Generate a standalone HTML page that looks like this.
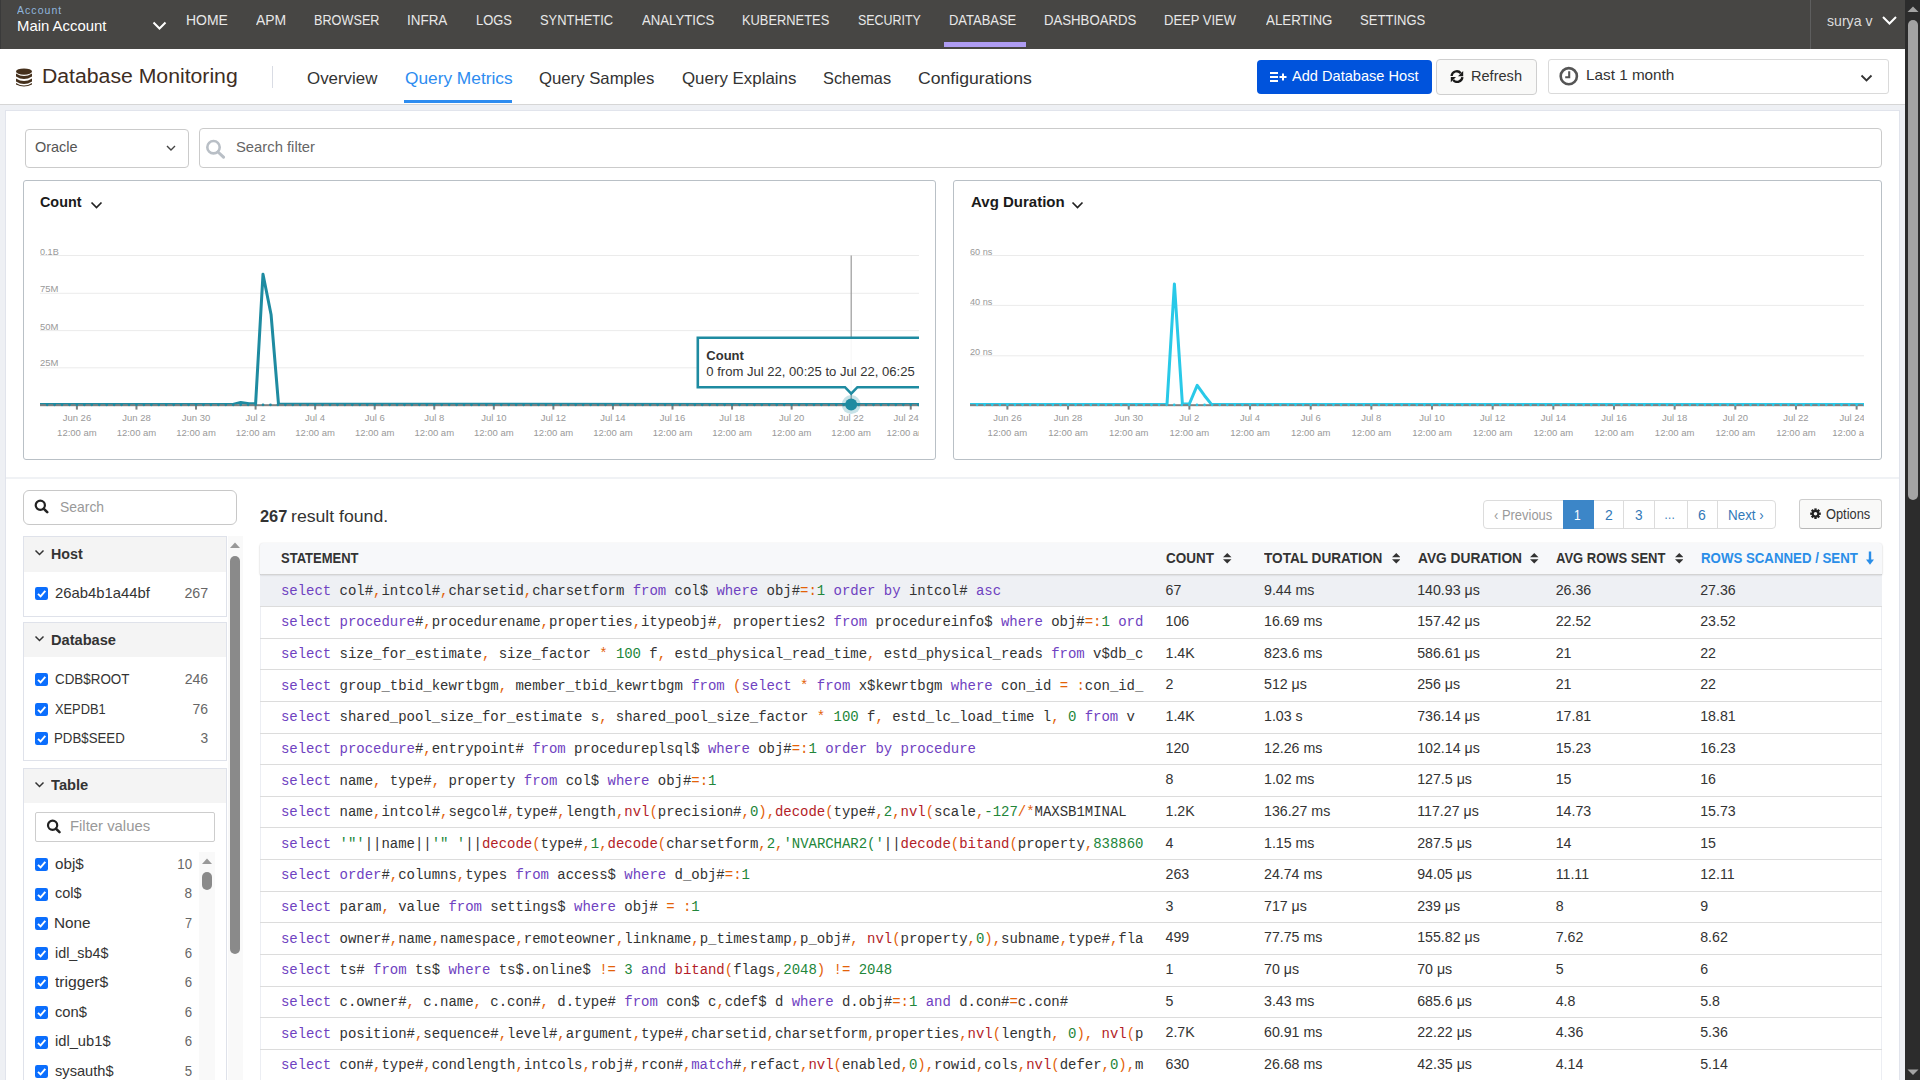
<!DOCTYPE html>
<html><head><meta charset="utf-8"><title>Database Monitoring</title>
<style>
html,body{margin:0;padding:0;width:1920px;height:1080px;overflow:hidden;background:#eef0f4;}
body{position:relative;font-family:'Liberation Sans',sans-serif;}
.t{position:absolute;white-space:nowrap;}
.r{position:absolute;box-sizing:border-box;}
.kw{color:#6f42c1}.fn{color:#b31d28}.op{color:#e36209}.nu{color:#22863a}.st{color:#22863a}
</style></head><body>
<div class="r" style="left:0.00px;top:0.00px;width:1905.00px;height:48.50px;background:#474644;"></div>
<div class="r" style="left:0.00px;top:0.00px;width:1.00px;height:48.50px;background:#3a3a3a;"></div>
<div id="t1" class="t" style="left:17.00px;top:5.53px;font-size:10.00px;line-height:10.00px;color:#8fb5dd;font-weight:400;font-family:'Liberation Sans', sans-serif;transform:scaleX(1.0507);transform-origin:left center;letter-spacing:1px;">Account</div>
<div id="t2" class="t" style="left:17.01px;top:18.30px;font-size:15.00px;line-height:15.00px;color:#ffffff;font-weight:400;font-family:'Liberation Sans', sans-serif;transform:scaleX(0.9922);transform-origin:left center;">Main Account</div>
<svg class="r" style="left:152.00px;top:21.00px;" width="15.00" height="9.00" viewBox="0 0 15.00 9.00"><path d="M1.5 1.5 L7.5 7.5 L13.5 1.5" fill="none" stroke="#fff" stroke-width="2"/></svg>
<div id="t3" class="t" style="left:186.00px;top:13.25px;font-size:14.00px;line-height:14.00px;color:#e8e8e8;font-weight:400;font-family:'Liberation Sans', sans-serif;transform:scaleX(0.9960);transform-origin:left center;">HOME</div>
<div id="t4" class="t" style="left:256.00px;top:13.25px;font-size:14.00px;line-height:14.00px;color:#e8e8e8;font-weight:400;font-family:'Liberation Sans', sans-serif;transform:scaleX(0.9941);transform-origin:left center;">APM</div>
<div id="t5" class="t" style="left:313.59px;top:13.25px;font-size:14.00px;line-height:14.00px;color:#e8e8e8;font-weight:400;font-family:'Liberation Sans', sans-serif;transform:scaleX(0.9055);transform-origin:left center;">BROWSER</div>
<div id="t6" class="t" style="left:407.04px;top:13.25px;font-size:14.00px;line-height:14.00px;color:#e8e8e8;font-weight:400;font-family:'Liberation Sans', sans-serif;transform:scaleX(0.9601);transform-origin:left center;">INFRA</div>
<div id="t7" class="t" style="left:475.82px;top:13.25px;font-size:14.00px;line-height:14.00px;color:#e8e8e8;font-weight:400;font-family:'Liberation Sans', sans-serif;transform:scaleX(0.9251);transform-origin:left center;">LOGS</div>
<div id="t8" class="t" style="left:540.00px;top:13.25px;font-size:14.00px;line-height:14.00px;color:#e8e8e8;font-weight:400;font-family:'Liberation Sans', sans-serif;transform:scaleX(0.9214);transform-origin:left center;">SYNTHETIC</div>
<div id="t9" class="t" style="left:642.00px;top:13.25px;font-size:14.00px;line-height:14.00px;color:#e8e8e8;font-weight:400;font-family:'Liberation Sans', sans-serif;transform:scaleX(0.9421);transform-origin:left center;">ANALYTICS</div>
<div id="t10" class="t" style="left:742.08px;top:13.25px;font-size:14.00px;line-height:14.00px;color:#e8e8e8;font-weight:400;font-family:'Liberation Sans', sans-serif;transform:scaleX(0.9191);transform-origin:left center;">KUBERNETES</div>
<div id="t11" class="t" style="left:857.50px;top:13.25px;font-size:14.00px;line-height:14.00px;color:#e8e8e8;font-weight:400;font-family:'Liberation Sans', sans-serif;transform:scaleX(0.8888);transform-origin:left center;">SECURITY</div>
<div id="t12" class="t" style="left:949.07px;top:13.25px;font-size:14.00px;line-height:14.00px;color:#e8e8e8;font-weight:400;font-family:'Liberation Sans', sans-serif;transform:scaleX(0.9260);transform-origin:left center;">DATABASE</div>
<div id="t13" class="t" style="left:1044.06px;top:13.25px;font-size:14.00px;line-height:14.00px;color:#e8e8e8;font-weight:400;font-family:'Liberation Sans', sans-serif;transform:scaleX(0.9412);transform-origin:left center;">DASHBOARDS</div>
<div id="t14" class="t" style="left:1164.07px;top:13.25px;font-size:14.00px;line-height:14.00px;color:#e8e8e8;font-weight:400;font-family:'Liberation Sans', sans-serif;transform:scaleX(0.9281);transform-origin:left center;">DEEP VIEW</div>
<div id="t15" class="t" style="left:1265.50px;top:13.25px;font-size:14.00px;line-height:14.00px;color:#e8e8e8;font-weight:400;font-family:'Liberation Sans', sans-serif;transform:scaleX(0.9511);transform-origin:left center;">ALERTING</div>
<div id="t16" class="t" style="left:1359.50px;top:13.25px;font-size:14.00px;line-height:14.00px;color:#e8e8e8;font-weight:400;font-family:'Liberation Sans', sans-serif;transform:scaleX(0.9330);transform-origin:left center;">SETTINGS</div>
<div class="r" style="left:944.00px;top:42.00px;width:82.00px;height:5.00px;background:#ae9cf2;"></div>
<div class="r" style="left:1809.50px;top:0.00px;width:1.00px;height:48.50px;background:#5e5e5e;"></div>
<div id="t17" class="t" style="left:1827.00px;top:13.30px;font-size:15.00px;line-height:15.00px;color:#dcdcdc;font-weight:400;font-family:'Liberation Sans', sans-serif;transform:scaleX(0.9397);transform-origin:left center;">surya v</div>
<svg class="r" style="left:1882.00px;top:16.00px;" width="15.00" height="9.00" viewBox="0 0 15.00 9.00"><path d="M1 1 L7.5 7.5 L14 1" fill="none" stroke="#fff" stroke-width="2"/></svg>
<div class="r" style="left:1905.00px;top:0.00px;width:15.00px;height:1080.00px;background:#2c2c2c;"></div>
<svg class="r" style="left:1907.00px;top:6.00px;" width="12.00" height="7.00" viewBox="0 0 12.00 7.00"><path d="M6 0.5 L11.5 6 L0.5 6 Z" fill="#a3a3a3"/></svg>
<div class="r" style="left:1908.00px;top:20.00px;width:10.00px;height:480.00px;background:#a3a3a3;border-radius:5px;"></div>
<svg class="r" style="left:1907.00px;top:1068.50px;" width="12.00" height="7.00" viewBox="0 0 12.00 7.00"><path d="M0.5 0.5 L11.5 0.5 L6 6 Z" fill="#a3a3a3"/></svg>
<div class="r" style="left:0.00px;top:48.50px;width:1905.00px;height:55.50px;background:#fff;"></div>
<div class="r" style="left:0.00px;top:104.00px;width:1905.00px;height:1.00px;background:#d6d6d6;"></div>
<svg class="r" style="left:15.00px;top:68.00px;" width="18.00" height="20.00" viewBox="0 0 18.00 20.00"><g fill="#45301c">
<ellipse cx="9" cy="3.6" rx="8" ry="3.2"/>
<path d="M1 5.5 Q9 10.5 17 5.5 L17 8.5 Q9 13.5 1 8.5 Z"/>
<path d="M1 10.5 Q9 15.5 17 10.5 L17 13.5 Q9 18.5 1 13.5 Z"/>
<path d="M1 15 Q9 20 17 15 L17 16.5 Q9 20.5 1 16.5 Z"/>
</g></svg>
<div id="t18" class="t" style="left:41.91px;top:67.09px;font-size:19.50px;line-height:19.50px;color:#3e2d1f;font-weight:400;font-family:'Liberation Sans', sans-serif;transform:scaleX(1.0876);transform-origin:left center;">Database Monitoring</div>
<div class="r" style="left:271.50px;top:66.00px;width:1.50px;height:22.00px;background:#d9dce4;"></div>
<div id="t19" class="t" style="left:307.00px;top:69.78px;font-size:16.50px;line-height:16.50px;color:#333;font-weight:400;font-family:'Liberation Sans', sans-serif;transform:scaleX(1.0240);transform-origin:left center;">Overview</div>
<div id="t20" class="t" style="left:404.60px;top:69.78px;font-size:16.50px;line-height:16.50px;color:#2d8cf0;font-weight:400;font-family:'Liberation Sans', sans-serif;transform:scaleX(1.0475);transform-origin:left center;">Query Metrics</div>
<div id="t21" class="t" style="left:539.40px;top:69.78px;font-size:16.50px;line-height:16.50px;color:#333;font-weight:400;font-family:'Liberation Sans', sans-serif;transform:scaleX(1.0136);transform-origin:left center;">Query Samples</div>
<div id="t22" class="t" style="left:681.90px;top:69.78px;font-size:16.50px;line-height:16.50px;color:#333;font-weight:400;font-family:'Liberation Sans', sans-serif;transform:scaleX(1.0221);transform-origin:left center;">Query Explains</div>
<div id="t23" class="t" style="left:823.00px;top:69.78px;font-size:16.50px;line-height:16.50px;color:#333;font-weight:400;font-family:'Liberation Sans', sans-serif;transform:scaleX(0.9894);transform-origin:left center;">Schemas</div>
<div id="t24" class="t" style="left:918.00px;top:69.78px;font-size:16.50px;line-height:16.50px;color:#333;font-weight:400;font-family:'Liberation Sans', sans-serif;transform:scaleX(1.0693);transform-origin:left center;">Configurations</div>
<div class="r" style="left:404.00px;top:100.00px;width:108.00px;height:3.00px;background:#2d8cf0;"></div>
<div class="r" style="left:1257.00px;top:60.00px;width:175.00px;height:34.00px;background:#0053dc;border-radius:4px;"></div>
<svg class="r" style="left:1269.00px;top:71.00px;" width="18.00" height="12.00" viewBox="0 0 18.00 12.00"><g fill="#fff"><rect x="1" y="1" width="8" height="2"/><rect x="1" y="5" width="8" height="2"/><rect x="1" y="9" width="8" height="2"/><rect x="10.5" y="5" width="7" height="2"/><rect x="13" y="2.5" width="2" height="7"/></g></svg>
<div id="t25" class="t" style="left:1291.70px;top:68.10px;font-size:15.00px;line-height:15.00px;color:#fff;font-weight:400;font-family:'Liberation Sans', sans-serif;transform:scaleX(0.9724);transform-origin:left center;">Add Database Host</div>
<div class="r" style="left:1436.00px;top:59.00px;width:101.00px;height:36.00px;background:#f9f9f8;border:1px solid #cfcfcf;border-radius:4px;"></div>
<svg class="r" style="left:1449.50px;top:69.50px;" width="14.00" height="13.00" viewBox="0 0 14.00 13.00"><g fill="none" stroke="#1a1a1a" stroke-width="2.3">
<path d="M1.6 6 A5.2 5.2 0 0 1 10.8 3.2"/><path d="M12.4 7.2 A5.2 5.2 0 0 1 3.2 10"/></g>
<path d="M8 6.2 L13.2 6.2 L13.2 1 Z" fill="#1a1a1a"/><path d="M6 7 L0.8 7 L0.8 12.2 Z" fill="#1a1a1a"/></svg>
<div id="t26" class="t" style="left:1471.03px;top:68.10px;font-size:15.00px;line-height:15.00px;color:#333;font-weight:400;font-family:'Liberation Sans', sans-serif;transform:scaleX(0.9711);transform-origin:left center;">Refresh</div>
<div class="r" style="left:1548.00px;top:59.00px;width:341.00px;height:35.00px;background:#fff;border:1px solid #dadada;border-radius:3px;"></div>
<svg class="r" style="left:1558.00px;top:66.00px;" width="22.00" height="20.00" viewBox="0 0 22.00 20.00"><circle cx="10.8" cy="10.2" r="8.1" fill="none" stroke="#555" stroke-width="2.6"/><path d="M11.2 5.2 L11.2 11.2 L7.2 11.2" fill="none" stroke="#555" stroke-width="2.1"/></svg>
<div id="t27" class="t" style="left:1585.98px;top:66.90px;font-size:15.00px;line-height:15.00px;color:#333;font-weight:400;font-family:'Liberation Sans', sans-serif;transform:scaleX(1.0190);transform-origin:left center;">Last 1 month</div>
<svg class="r" style="left:1860.00px;top:74.00px;" width="14.00" height="9.00" viewBox="0 0 14.00 9.00"><path d="M1.5 1.5 L6.5 6.5 L11.5 1.5" fill="none" stroke="#333" stroke-width="1.8"/></svg>
<div class="r" style="left:5.00px;top:110.00px;width:1895.00px;height:980.00px;background:#fff;border:1px solid #e1e4ec;"></div>
<div class="r" style="left:25.00px;top:129.00px;width:163.50px;height:38.50px;background:#fff;border:1px solid #cbcbcb;border-radius:4px;"></div>
<div id="t28" class="t" style="left:35.00px;top:140.02px;font-size:14.50px;line-height:14.50px;color:#555;font-weight:400;font-family:'Liberation Sans', sans-serif;transform:scaleX(0.9967);transform-origin:left center;">Oracle</div>
<svg class="r" style="left:165.00px;top:144.00px;" width="12.00" height="8.00" viewBox="0 0 12.00 8.00"><path d="M2 2 L6 6 L10 2" fill="none" stroke="#444" stroke-width="1.4"/></svg>
<div class="r" style="left:198.50px;top:128.40px;width:1683.20px;height:40.00px;background:#fff;border:1px solid #cbcbcb;border-radius:4px;"></div>
<svg class="r" style="left:205.00px;top:139.00px;" width="22.00" height="20.00" viewBox="0 0 22.00 20.00"><circle cx="8.5" cy="8.2" r="6.2" fill="none" stroke="#b9bfc6" stroke-width="2.6"/><path d="M13 13 L18.5 18.2" stroke="#b9bfc6" stroke-width="3" stroke-linecap="round"/></svg>
<div id="t29" class="t" style="left:235.50px;top:140.02px;font-size:14.50px;line-height:14.50px;color:#666;font-weight:400;font-family:'Liberation Sans', sans-serif;transform:scaleX(1.0202);transform-origin:left center;">Search filter</div>
<div class="r" style="left:6.00px;top:477.00px;width:1893.00px;height:2.00px;background:#f0f2f5;"></div>
<div class="r" style="left:23.00px;top:180.00px;width:912.50px;height:279.60px;background:#fff;border:1px solid #b9c0c6;border-radius:3px;"></div>
<div id="t30" class="t" style="left:40.20px;top:195.35px;font-size:14.00px;line-height:14.00px;color:#1a1a1a;font-weight:700;font-family:'Liberation Sans', sans-serif;transform:scaleX(1.0254);transform-origin:left center;">Count</div>
<svg class="r" style="left:90.00px;top:201.00px;" width="13.00" height="9.00" viewBox="0 0 13.00 9.00"><path d="M1.5 1.5 L6.5 6.5 L11.5 1.5" fill="none" stroke="#222" stroke-width="1.7"/></svg>
<svg class="r" style="left:40.00px;top:230.00px;overflow:hidden;" width="879.00" height="220.00" viewBox="0 0 879.00 220.00"><rect x="0" y="25.00" width="879.00" height="1" fill="#ebebeb"/><rect x="0" y="62.80" width="879.00" height="1" fill="#ebebeb"/><rect x="0" y="100.10" width="879.00" height="1" fill="#ebebeb"/><rect x="0" y="137.30" width="879.00" height="1" fill="#ebebeb"/><polyline points="-2.00,174.60 192.00,174.60 200.70,172.40 209.00,173.80 215.60,173.80 223.00,44.20 231.10,84.80 238.50,174.20 885.00,174.60" fill="none" stroke="#1e8ba1" stroke-width="3" stroke-linejoin="round" stroke-linecap="round"/><rect x="0" y="174.20" width="879.00" height="2" fill="#808080"/><rect x="35.90" y="175.60" width="2" height="4" fill="#808080"/><rect x="95.46" y="175.60" width="2" height="4" fill="#808080"/><rect x="155.02" y="175.60" width="2" height="4" fill="#808080"/><rect x="214.58" y="175.60" width="2" height="4" fill="#808080"/><rect x="274.14" y="175.60" width="2" height="4" fill="#808080"/><rect x="333.70" y="175.60" width="2" height="4" fill="#808080"/><rect x="393.26" y="175.60" width="2" height="4" fill="#808080"/><rect x="452.82" y="175.60" width="2" height="4" fill="#808080"/><rect x="512.38" y="175.60" width="2" height="4" fill="#808080"/><rect x="571.94" y="175.60" width="2" height="4" fill="#808080"/><rect x="631.50" y="175.60" width="2" height="4" fill="#808080"/><rect x="691.06" y="175.60" width="2" height="4" fill="#808080"/><rect x="750.62" y="175.60" width="2" height="4" fill="#808080"/><rect x="810.18" y="175.60" width="2" height="4" fill="#808080"/><rect x="869.74" y="175.60" width="2" height="4" fill="#808080"/><circle cx="7.12" cy="174.80" r="1.35" fill="#1e8ba1"/><circle cx="14.57" cy="174.80" r="1.35" fill="#1e8ba1"/><circle cx="22.01" cy="174.80" r="1.35" fill="#1e8ba1"/><circle cx="29.46" cy="174.80" r="1.35" fill="#1e8ba1"/><circle cx="36.90" cy="174.80" r="1.35" fill="#1e8ba1"/><circle cx="44.34" cy="174.80" r="1.35" fill="#1e8ba1"/><circle cx="51.79" cy="174.80" r="1.35" fill="#1e8ba1"/><circle cx="59.23" cy="174.80" r="1.35" fill="#1e8ba1"/><circle cx="66.68" cy="174.80" r="1.35" fill="#1e8ba1"/><circle cx="74.12" cy="174.80" r="1.35" fill="#1e8ba1"/><circle cx="81.57" cy="174.80" r="1.35" fill="#1e8ba1"/><circle cx="89.01" cy="174.80" r="1.35" fill="#1e8ba1"/><circle cx="96.46" cy="174.80" r="1.35" fill="#1e8ba1"/><circle cx="103.90" cy="174.80" r="1.35" fill="#1e8ba1"/><circle cx="111.35" cy="174.80" r="1.35" fill="#1e8ba1"/><circle cx="118.79" cy="174.80" r="1.35" fill="#1e8ba1"/><circle cx="126.24" cy="174.80" r="1.35" fill="#1e8ba1"/><circle cx="133.68" cy="174.80" r="1.35" fill="#1e8ba1"/><circle cx="141.13" cy="174.80" r="1.35" fill="#1e8ba1"/><circle cx="148.57" cy="174.80" r="1.35" fill="#1e8ba1"/><circle cx="156.02" cy="174.80" r="1.35" fill="#1e8ba1"/><circle cx="163.46" cy="174.80" r="1.35" fill="#1e8ba1"/><circle cx="170.91" cy="174.80" r="1.35" fill="#1e8ba1"/><circle cx="178.35" cy="174.80" r="1.35" fill="#1e8ba1"/><circle cx="185.80" cy="174.80" r="1.35" fill="#1e8ba1"/><circle cx="193.24" cy="174.80" r="1.35" fill="#1e8ba1"/><circle cx="200.69" cy="174.80" r="1.35" fill="#1e8ba1"/><circle cx="208.13" cy="174.80" r="1.35" fill="#1e8ba1"/><circle cx="215.58" cy="174.80" r="1.35" fill="#1e8ba1"/><circle cx="223.02" cy="174.80" r="1.35" fill="#1e8ba1"/><circle cx="230.47" cy="174.80" r="1.35" fill="#1e8ba1"/><circle cx="237.91" cy="174.80" r="1.35" fill="#1e8ba1"/><circle cx="245.36" cy="174.80" r="1.35" fill="#1e8ba1"/><circle cx="252.80" cy="174.80" r="1.35" fill="#1e8ba1"/><circle cx="260.25" cy="174.80" r="1.35" fill="#1e8ba1"/><circle cx="267.69" cy="174.80" r="1.35" fill="#1e8ba1"/><circle cx="275.14" cy="174.80" r="1.35" fill="#1e8ba1"/><circle cx="282.58" cy="174.80" r="1.35" fill="#1e8ba1"/><circle cx="290.03" cy="174.80" r="1.35" fill="#1e8ba1"/><circle cx="297.47" cy="174.80" r="1.35" fill="#1e8ba1"/><circle cx="304.92" cy="174.80" r="1.35" fill="#1e8ba1"/><circle cx="312.36" cy="174.80" r="1.35" fill="#1e8ba1"/><circle cx="319.81" cy="174.80" r="1.35" fill="#1e8ba1"/><circle cx="327.25" cy="174.80" r="1.35" fill="#1e8ba1"/><circle cx="334.70" cy="174.80" r="1.35" fill="#1e8ba1"/><circle cx="342.14" cy="174.80" r="1.35" fill="#1e8ba1"/><circle cx="349.59" cy="174.80" r="1.35" fill="#1e8ba1"/><circle cx="357.03" cy="174.80" r="1.35" fill="#1e8ba1"/><circle cx="364.48" cy="174.80" r="1.35" fill="#1e8ba1"/><circle cx="371.92" cy="174.80" r="1.35" fill="#1e8ba1"/><circle cx="379.37" cy="174.80" r="1.35" fill="#1e8ba1"/><circle cx="386.81" cy="174.80" r="1.35" fill="#1e8ba1"/><circle cx="394.26" cy="174.80" r="1.35" fill="#1e8ba1"/><circle cx="401.70" cy="174.80" r="1.35" fill="#1e8ba1"/><circle cx="409.15" cy="174.80" r="1.35" fill="#1e8ba1"/><circle cx="416.59" cy="174.80" r="1.35" fill="#1e8ba1"/><circle cx="424.04" cy="174.80" r="1.35" fill="#1e8ba1"/><circle cx="431.48" cy="174.80" r="1.35" fill="#1e8ba1"/><circle cx="438.93" cy="174.80" r="1.35" fill="#1e8ba1"/><circle cx="446.37" cy="174.80" r="1.35" fill="#1e8ba1"/><circle cx="453.82" cy="174.80" r="1.35" fill="#1e8ba1"/><circle cx="461.26" cy="174.80" r="1.35" fill="#1e8ba1"/><circle cx="468.71" cy="174.80" r="1.35" fill="#1e8ba1"/><circle cx="476.15" cy="174.80" r="1.35" fill="#1e8ba1"/><circle cx="483.60" cy="174.80" r="1.35" fill="#1e8ba1"/><circle cx="491.04" cy="174.80" r="1.35" fill="#1e8ba1"/><circle cx="498.49" cy="174.80" r="1.35" fill="#1e8ba1"/><circle cx="505.93" cy="174.80" r="1.35" fill="#1e8ba1"/><circle cx="513.38" cy="174.80" r="1.35" fill="#1e8ba1"/><circle cx="520.82" cy="174.80" r="1.35" fill="#1e8ba1"/><circle cx="528.27" cy="174.80" r="1.35" fill="#1e8ba1"/><circle cx="535.72" cy="174.80" r="1.35" fill="#1e8ba1"/><circle cx="543.16" cy="174.80" r="1.35" fill="#1e8ba1"/><circle cx="550.61" cy="174.80" r="1.35" fill="#1e8ba1"/><circle cx="558.05" cy="174.80" r="1.35" fill="#1e8ba1"/><circle cx="565.50" cy="174.80" r="1.35" fill="#1e8ba1"/><circle cx="572.94" cy="174.80" r="1.35" fill="#1e8ba1"/><circle cx="580.39" cy="174.80" r="1.35" fill="#1e8ba1"/><circle cx="587.83" cy="174.80" r="1.35" fill="#1e8ba1"/><circle cx="595.28" cy="174.80" r="1.35" fill="#1e8ba1"/><circle cx="602.72" cy="174.80" r="1.35" fill="#1e8ba1"/><circle cx="610.17" cy="174.80" r="1.35" fill="#1e8ba1"/><circle cx="617.61" cy="174.80" r="1.35" fill="#1e8ba1"/><circle cx="625.06" cy="174.80" r="1.35" fill="#1e8ba1"/><circle cx="632.50" cy="174.80" r="1.35" fill="#1e8ba1"/><circle cx="639.95" cy="174.80" r="1.35" fill="#1e8ba1"/><circle cx="647.39" cy="174.80" r="1.35" fill="#1e8ba1"/><circle cx="654.84" cy="174.80" r="1.35" fill="#1e8ba1"/><circle cx="662.28" cy="174.80" r="1.35" fill="#1e8ba1"/><circle cx="669.73" cy="174.80" r="1.35" fill="#1e8ba1"/><circle cx="677.17" cy="174.80" r="1.35" fill="#1e8ba1"/><circle cx="684.62" cy="174.80" r="1.35" fill="#1e8ba1"/><circle cx="692.06" cy="174.80" r="1.35" fill="#1e8ba1"/><circle cx="699.51" cy="174.80" r="1.35" fill="#1e8ba1"/><circle cx="706.95" cy="174.80" r="1.35" fill="#1e8ba1"/><circle cx="714.40" cy="174.80" r="1.35" fill="#1e8ba1"/><circle cx="721.84" cy="174.80" r="1.35" fill="#1e8ba1"/><circle cx="729.29" cy="174.80" r="1.35" fill="#1e8ba1"/><circle cx="736.73" cy="174.80" r="1.35" fill="#1e8ba1"/><circle cx="744.18" cy="174.80" r="1.35" fill="#1e8ba1"/><circle cx="751.62" cy="174.80" r="1.35" fill="#1e8ba1"/><circle cx="759.07" cy="174.80" r="1.35" fill="#1e8ba1"/><circle cx="766.51" cy="174.80" r="1.35" fill="#1e8ba1"/><circle cx="773.96" cy="174.80" r="1.35" fill="#1e8ba1"/><circle cx="781.40" cy="174.80" r="1.35" fill="#1e8ba1"/><circle cx="788.85" cy="174.80" r="1.35" fill="#1e8ba1"/><circle cx="796.29" cy="174.80" r="1.35" fill="#1e8ba1"/><circle cx="803.74" cy="174.80" r="1.35" fill="#1e8ba1"/><circle cx="811.18" cy="174.80" r="1.35" fill="#1e8ba1"/><circle cx="818.63" cy="174.80" r="1.35" fill="#1e8ba1"/><circle cx="826.07" cy="174.80" r="1.35" fill="#1e8ba1"/><circle cx="833.52" cy="174.80" r="1.35" fill="#1e8ba1"/><circle cx="840.96" cy="174.80" r="1.35" fill="#1e8ba1"/><circle cx="848.41" cy="174.80" r="1.35" fill="#1e8ba1"/><circle cx="855.85" cy="174.80" r="1.35" fill="#1e8ba1"/><circle cx="863.30" cy="174.80" r="1.35" fill="#1e8ba1"/><circle cx="870.74" cy="174.80" r="1.35" fill="#1e8ba1"/><circle cx="878.19" cy="174.80" r="1.35" fill="#1e8ba1"/><line x1="811.20" y1="25.5" x2="811.20" y2="174" stroke="#9a9a9a" stroke-width="1.2"/><circle cx="811.20" cy="174.6" r="9.5" fill="#1e8ba1" fill-opacity="0.25"/><circle cx="811.20" cy="174.6" r="6" fill="#1e8ba1"/><path d="M1000.00 107.8 L657.80 107.8 L657.80 157.2 L805.00 157.2 L811.20 163.6 L817.40 157.2 L1000.00 157.2" fill="#fff" fill-opacity="0.92" stroke="#1e8ba1" stroke-width="2.6"/><text x="666.30" y="130.2" font-family="Liberation Sans" font-size="13" font-weight="700" fill="#333">Count</text><text x="666.30" y="145.8" font-family="Liberation Sans" font-size="12.7" textLength="208.5" lengthAdjust="spacingAndGlyphs" fill="#333">0 from Jul 22, 00:25 to Jul 22, 06:25</text></svg>
<div id="t31" class="t" style="left:40.00px;top:248.08px;font-size:9.00px;line-height:9.00px;color:#999;font-weight:400;font-family:'Liberation Sans', sans-serif;transform:scaleX(1.0102);transform-origin:left center;">0.1B</div>
<div id="t32" class="t" style="left:40.00px;top:285.28px;font-size:9.00px;line-height:9.00px;color:#999;font-weight:400;font-family:'Liberation Sans', sans-serif;transform:scaleX(1.0523);transform-origin:left center;">75M</div>
<div id="t33" class="t" style="left:40.00px;top:322.68px;font-size:9.00px;line-height:9.00px;color:#999;font-weight:400;font-family:'Liberation Sans', sans-serif;transform:scaleX(1.0523);transform-origin:left center;">50M</div>
<div id="t34" class="t" style="left:40.00px;top:359.08px;font-size:9.00px;line-height:9.00px;color:#999;font-weight:400;font-family:'Liberation Sans', sans-serif;transform:scaleX(1.0523);transform-origin:left center;">25M</div>
<div class="r" style="left:40.00px;top:230px;width:879.00px;height:220px;overflow:hidden;"><div class="t" style="left:-3.10px;top:183.26px;width:80px;text-align:center;font-size:9.5px;line-height:9.5px;color:#999;">Jun 26</div><div class="t" style="left:-3.10px;top:198.26px;width:80px;text-align:center;font-size:9.5px;line-height:9.5px;color:#999;">12:00 am</div><div class="t" style="left:56.46px;top:183.26px;width:80px;text-align:center;font-size:9.5px;line-height:9.5px;color:#999;">Jun 28</div><div class="t" style="left:56.46px;top:198.26px;width:80px;text-align:center;font-size:9.5px;line-height:9.5px;color:#999;">12:00 am</div><div class="t" style="left:116.02px;top:183.26px;width:80px;text-align:center;font-size:9.5px;line-height:9.5px;color:#999;">Jun 30</div><div class="t" style="left:116.02px;top:198.26px;width:80px;text-align:center;font-size:9.5px;line-height:9.5px;color:#999;">12:00 am</div><div class="t" style="left:175.58px;top:183.26px;width:80px;text-align:center;font-size:9.5px;line-height:9.5px;color:#999;">Jul 2</div><div class="t" style="left:175.58px;top:198.26px;width:80px;text-align:center;font-size:9.5px;line-height:9.5px;color:#999;">12:00 am</div><div class="t" style="left:235.14px;top:183.26px;width:80px;text-align:center;font-size:9.5px;line-height:9.5px;color:#999;">Jul 4</div><div class="t" style="left:235.14px;top:198.26px;width:80px;text-align:center;font-size:9.5px;line-height:9.5px;color:#999;">12:00 am</div><div class="t" style="left:294.70px;top:183.26px;width:80px;text-align:center;font-size:9.5px;line-height:9.5px;color:#999;">Jul 6</div><div class="t" style="left:294.70px;top:198.26px;width:80px;text-align:center;font-size:9.5px;line-height:9.5px;color:#999;">12:00 am</div><div class="t" style="left:354.26px;top:183.26px;width:80px;text-align:center;font-size:9.5px;line-height:9.5px;color:#999;">Jul 8</div><div class="t" style="left:354.26px;top:198.26px;width:80px;text-align:center;font-size:9.5px;line-height:9.5px;color:#999;">12:00 am</div><div class="t" style="left:413.82px;top:183.26px;width:80px;text-align:center;font-size:9.5px;line-height:9.5px;color:#999;">Jul 10</div><div class="t" style="left:413.82px;top:198.26px;width:80px;text-align:center;font-size:9.5px;line-height:9.5px;color:#999;">12:00 am</div><div class="t" style="left:473.38px;top:183.26px;width:80px;text-align:center;font-size:9.5px;line-height:9.5px;color:#999;">Jul 12</div><div class="t" style="left:473.38px;top:198.26px;width:80px;text-align:center;font-size:9.5px;line-height:9.5px;color:#999;">12:00 am</div><div class="t" style="left:532.94px;top:183.26px;width:80px;text-align:center;font-size:9.5px;line-height:9.5px;color:#999;">Jul 14</div><div class="t" style="left:532.94px;top:198.26px;width:80px;text-align:center;font-size:9.5px;line-height:9.5px;color:#999;">12:00 am</div><div class="t" style="left:592.50px;top:183.26px;width:80px;text-align:center;font-size:9.5px;line-height:9.5px;color:#999;">Jul 16</div><div class="t" style="left:592.50px;top:198.26px;width:80px;text-align:center;font-size:9.5px;line-height:9.5px;color:#999;">12:00 am</div><div class="t" style="left:652.06px;top:183.26px;width:80px;text-align:center;font-size:9.5px;line-height:9.5px;color:#999;">Jul 18</div><div class="t" style="left:652.06px;top:198.26px;width:80px;text-align:center;font-size:9.5px;line-height:9.5px;color:#999;">12:00 am</div><div class="t" style="left:711.62px;top:183.26px;width:80px;text-align:center;font-size:9.5px;line-height:9.5px;color:#999;">Jul 20</div><div class="t" style="left:711.62px;top:198.26px;width:80px;text-align:center;font-size:9.5px;line-height:9.5px;color:#999;">12:00 am</div><div class="t" style="left:771.18px;top:183.26px;width:80px;text-align:center;font-size:9.5px;line-height:9.5px;color:#999;">Jul 22</div><div class="t" style="left:771.18px;top:198.26px;width:80px;text-align:center;font-size:9.5px;line-height:9.5px;color:#999;">12:00 am</div><div class="t" style="left:826.24px;top:183.26px;width:80px;text-align:center;font-size:9.5px;line-height:9.5px;color:#999;">Jul 24</div><div class="t" style="left:826.24px;top:198.26px;width:80px;text-align:center;font-size:9.5px;line-height:9.5px;color:#999;">12:00 am</div></div>
<div class="r" style="left:953.40px;top:180.00px;width:928.30px;height:279.60px;background:#fff;border:1px solid #b9c0c6;border-radius:3px;"></div>
<div id="t35" class="t" style="left:970.60px;top:195.35px;font-size:14.00px;line-height:14.00px;color:#1a1a1a;font-weight:700;font-family:'Liberation Sans', sans-serif;transform:scaleX(1.0724);transform-origin:left center;">Avg Duration</div>
<svg class="r" style="left:1071.00px;top:201.00px;" width="13.00" height="9.00" viewBox="0 0 13.00 9.00"><path d="M1.5 1.5 L6.5 6.5 L11.5 1.5" fill="none" stroke="#222" stroke-width="1.7"/></svg>
<svg class="r" style="left:970.00px;top:230.00px;overflow:hidden;" width="894.40" height="220.00" viewBox="0 0 894.40 220.00"><rect x="0" y="25.00" width="894.40" height="1" fill="#ebebeb"/><rect x="0" y="74.90" width="894.40" height="1" fill="#ebebeb"/><rect x="0" y="125.30" width="894.40" height="1" fill="#ebebeb"/><polyline points="-2.00,174.60 197.00,174.40 204.40,53.90 212.40,174.00 219.30,174.00 227.20,155.30 234.60,165.70 241.50,174.40 900.00,174.60" fill="none" stroke="#29c9e8" stroke-width="3" stroke-linejoin="round" stroke-linecap="round"/><rect x="0" y="174.20" width="894.40" height="2" fill="#808080"/><rect x="36.40" y="175.60" width="2" height="4" fill="#808080"/><rect x="97.06" y="175.60" width="2" height="4" fill="#808080"/><rect x="157.72" y="175.60" width="2" height="4" fill="#808080"/><rect x="218.38" y="175.60" width="2" height="4" fill="#808080"/><rect x="279.04" y="175.60" width="2" height="4" fill="#808080"/><rect x="339.70" y="175.60" width="2" height="4" fill="#808080"/><rect x="400.36" y="175.60" width="2" height="4" fill="#808080"/><rect x="461.02" y="175.60" width="2" height="4" fill="#808080"/><rect x="521.68" y="175.60" width="2" height="4" fill="#808080"/><rect x="582.34" y="175.60" width="2" height="4" fill="#808080"/><rect x="643.00" y="175.60" width="2" height="4" fill="#808080"/><rect x="703.66" y="175.60" width="2" height="4" fill="#808080"/><rect x="764.32" y="175.60" width="2" height="4" fill="#808080"/><rect x="824.98" y="175.60" width="2" height="4" fill="#808080"/><rect x="885.64" y="175.60" width="2" height="4" fill="#808080"/><circle cx="7.07" cy="174.80" r="1.35" fill="#29c9e8"/><circle cx="14.65" cy="174.80" r="1.35" fill="#29c9e8"/><circle cx="22.24" cy="174.80" r="1.35" fill="#29c9e8"/><circle cx="29.82" cy="174.80" r="1.35" fill="#29c9e8"/><circle cx="37.40" cy="174.80" r="1.35" fill="#29c9e8"/><circle cx="44.98" cy="174.80" r="1.35" fill="#29c9e8"/><circle cx="52.56" cy="174.80" r="1.35" fill="#29c9e8"/><circle cx="60.15" cy="174.80" r="1.35" fill="#29c9e8"/><circle cx="67.73" cy="174.80" r="1.35" fill="#29c9e8"/><circle cx="75.31" cy="174.80" r="1.35" fill="#29c9e8"/><circle cx="82.89" cy="174.80" r="1.35" fill="#29c9e8"/><circle cx="90.48" cy="174.80" r="1.35" fill="#29c9e8"/><circle cx="98.06" cy="174.80" r="1.35" fill="#29c9e8"/><circle cx="105.64" cy="174.80" r="1.35" fill="#29c9e8"/><circle cx="113.22" cy="174.80" r="1.35" fill="#29c9e8"/><circle cx="120.81" cy="174.80" r="1.35" fill="#29c9e8"/><circle cx="128.39" cy="174.80" r="1.35" fill="#29c9e8"/><circle cx="135.97" cy="174.80" r="1.35" fill="#29c9e8"/><circle cx="143.55" cy="174.80" r="1.35" fill="#29c9e8"/><circle cx="151.14" cy="174.80" r="1.35" fill="#29c9e8"/><circle cx="158.72" cy="174.80" r="1.35" fill="#29c9e8"/><circle cx="166.30" cy="174.80" r="1.35" fill="#29c9e8"/><circle cx="173.88" cy="174.80" r="1.35" fill="#29c9e8"/><circle cx="181.47" cy="174.80" r="1.35" fill="#29c9e8"/><circle cx="189.05" cy="174.80" r="1.35" fill="#29c9e8"/><circle cx="196.63" cy="174.80" r="1.35" fill="#29c9e8"/><circle cx="204.21" cy="174.80" r="1.35" fill="#29c9e8"/><circle cx="211.80" cy="174.80" r="1.35" fill="#29c9e8"/><circle cx="219.38" cy="174.80" r="1.35" fill="#29c9e8"/><circle cx="226.96" cy="174.80" r="1.35" fill="#29c9e8"/><circle cx="234.54" cy="174.80" r="1.35" fill="#29c9e8"/><circle cx="242.13" cy="174.80" r="1.35" fill="#29c9e8"/><circle cx="249.71" cy="174.80" r="1.35" fill="#29c9e8"/><circle cx="257.29" cy="174.80" r="1.35" fill="#29c9e8"/><circle cx="264.87" cy="174.80" r="1.35" fill="#29c9e8"/><circle cx="272.46" cy="174.80" r="1.35" fill="#29c9e8"/><circle cx="280.04" cy="174.80" r="1.35" fill="#29c9e8"/><circle cx="287.62" cy="174.80" r="1.35" fill="#29c9e8"/><circle cx="295.20" cy="174.80" r="1.35" fill="#29c9e8"/><circle cx="302.79" cy="174.80" r="1.35" fill="#29c9e8"/><circle cx="310.37" cy="174.80" r="1.35" fill="#29c9e8"/><circle cx="317.95" cy="174.80" r="1.35" fill="#29c9e8"/><circle cx="325.53" cy="174.80" r="1.35" fill="#29c9e8"/><circle cx="333.12" cy="174.80" r="1.35" fill="#29c9e8"/><circle cx="340.70" cy="174.80" r="1.35" fill="#29c9e8"/><circle cx="348.28" cy="174.80" r="1.35" fill="#29c9e8"/><circle cx="355.86" cy="174.80" r="1.35" fill="#29c9e8"/><circle cx="363.45" cy="174.80" r="1.35" fill="#29c9e8"/><circle cx="371.03" cy="174.80" r="1.35" fill="#29c9e8"/><circle cx="378.61" cy="174.80" r="1.35" fill="#29c9e8"/><circle cx="386.19" cy="174.80" r="1.35" fill="#29c9e8"/><circle cx="393.78" cy="174.80" r="1.35" fill="#29c9e8"/><circle cx="401.36" cy="174.80" r="1.35" fill="#29c9e8"/><circle cx="408.94" cy="174.80" r="1.35" fill="#29c9e8"/><circle cx="416.52" cy="174.80" r="1.35" fill="#29c9e8"/><circle cx="424.11" cy="174.80" r="1.35" fill="#29c9e8"/><circle cx="431.69" cy="174.80" r="1.35" fill="#29c9e8"/><circle cx="439.27" cy="174.80" r="1.35" fill="#29c9e8"/><circle cx="446.85" cy="174.80" r="1.35" fill="#29c9e8"/><circle cx="454.44" cy="174.80" r="1.35" fill="#29c9e8"/><circle cx="462.02" cy="174.80" r="1.35" fill="#29c9e8"/><circle cx="469.60" cy="174.80" r="1.35" fill="#29c9e8"/><circle cx="477.18" cy="174.80" r="1.35" fill="#29c9e8"/><circle cx="484.77" cy="174.80" r="1.35" fill="#29c9e8"/><circle cx="492.35" cy="174.80" r="1.35" fill="#29c9e8"/><circle cx="499.93" cy="174.80" r="1.35" fill="#29c9e8"/><circle cx="507.51" cy="174.80" r="1.35" fill="#29c9e8"/><circle cx="515.10" cy="174.80" r="1.35" fill="#29c9e8"/><circle cx="522.68" cy="174.80" r="1.35" fill="#29c9e8"/><circle cx="530.26" cy="174.80" r="1.35" fill="#29c9e8"/><circle cx="537.84" cy="174.80" r="1.35" fill="#29c9e8"/><circle cx="545.43" cy="174.80" r="1.35" fill="#29c9e8"/><circle cx="553.01" cy="174.80" r="1.35" fill="#29c9e8"/><circle cx="560.59" cy="174.80" r="1.35" fill="#29c9e8"/><circle cx="568.17" cy="174.80" r="1.35" fill="#29c9e8"/><circle cx="575.76" cy="174.80" r="1.35" fill="#29c9e8"/><circle cx="583.34" cy="174.80" r="1.35" fill="#29c9e8"/><circle cx="590.92" cy="174.80" r="1.35" fill="#29c9e8"/><circle cx="598.50" cy="174.80" r="1.35" fill="#29c9e8"/><circle cx="606.09" cy="174.80" r="1.35" fill="#29c9e8"/><circle cx="613.67" cy="174.80" r="1.35" fill="#29c9e8"/><circle cx="621.25" cy="174.80" r="1.35" fill="#29c9e8"/><circle cx="628.83" cy="174.80" r="1.35" fill="#29c9e8"/><circle cx="636.42" cy="174.80" r="1.35" fill="#29c9e8"/><circle cx="644.00" cy="174.80" r="1.35" fill="#29c9e8"/><circle cx="651.58" cy="174.80" r="1.35" fill="#29c9e8"/><circle cx="659.16" cy="174.80" r="1.35" fill="#29c9e8"/><circle cx="666.75" cy="174.80" r="1.35" fill="#29c9e8"/><circle cx="674.33" cy="174.80" r="1.35" fill="#29c9e8"/><circle cx="681.91" cy="174.80" r="1.35" fill="#29c9e8"/><circle cx="689.49" cy="174.80" r="1.35" fill="#29c9e8"/><circle cx="697.08" cy="174.80" r="1.35" fill="#29c9e8"/><circle cx="704.66" cy="174.80" r="1.35" fill="#29c9e8"/><circle cx="712.24" cy="174.80" r="1.35" fill="#29c9e8"/><circle cx="719.82" cy="174.80" r="1.35" fill="#29c9e8"/><circle cx="727.41" cy="174.80" r="1.35" fill="#29c9e8"/><circle cx="734.99" cy="174.80" r="1.35" fill="#29c9e8"/><circle cx="742.57" cy="174.80" r="1.35" fill="#29c9e8"/><circle cx="750.15" cy="174.80" r="1.35" fill="#29c9e8"/><circle cx="757.74" cy="174.80" r="1.35" fill="#29c9e8"/><circle cx="765.32" cy="174.80" r="1.35" fill="#29c9e8"/><circle cx="772.90" cy="174.80" r="1.35" fill="#29c9e8"/><circle cx="780.48" cy="174.80" r="1.35" fill="#29c9e8"/><circle cx="788.07" cy="174.80" r="1.35" fill="#29c9e8"/><circle cx="795.65" cy="174.80" r="1.35" fill="#29c9e8"/><circle cx="803.23" cy="174.80" r="1.35" fill="#29c9e8"/><circle cx="810.81" cy="174.80" r="1.35" fill="#29c9e8"/><circle cx="818.40" cy="174.80" r="1.35" fill="#29c9e8"/><circle cx="825.98" cy="174.80" r="1.35" fill="#29c9e8"/><circle cx="833.56" cy="174.80" r="1.35" fill="#29c9e8"/><circle cx="841.14" cy="174.80" r="1.35" fill="#29c9e8"/><circle cx="848.73" cy="174.80" r="1.35" fill="#29c9e8"/><circle cx="856.31" cy="174.80" r="1.35" fill="#29c9e8"/><circle cx="863.89" cy="174.80" r="1.35" fill="#29c9e8"/><circle cx="871.47" cy="174.80" r="1.35" fill="#29c9e8"/><circle cx="879.06" cy="174.80" r="1.35" fill="#29c9e8"/><circle cx="886.64" cy="174.80" r="1.35" fill="#29c9e8"/><circle cx="894.22" cy="174.80" r="1.35" fill="#29c9e8"/></svg>
<div id="t36" class="t" style="left:970.00px;top:248.28px;font-size:9.00px;line-height:9.00px;color:#999;font-weight:400;font-family:'Liberation Sans', sans-serif;transform:scaleX(1.0170);transform-origin:left center;">60 ns</div>
<div id="t37" class="t" style="left:970.00px;top:298.18px;font-size:9.00px;line-height:9.00px;color:#999;font-weight:400;font-family:'Liberation Sans', sans-serif;transform:scaleX(1.0170);transform-origin:left center;">40 ns</div>
<div id="t38" class="t" style="left:970.00px;top:348.08px;font-size:9.00px;line-height:9.00px;color:#999;font-weight:400;font-family:'Liberation Sans', sans-serif;transform:scaleX(1.0170);transform-origin:left center;">20 ns</div>
<div class="r" style="left:970.00px;top:230px;width:894.40px;height:220px;overflow:hidden;"><div class="t" style="left:-2.60px;top:183.26px;width:80px;text-align:center;font-size:9.5px;line-height:9.5px;color:#999;">Jun 26</div><div class="t" style="left:-2.60px;top:198.26px;width:80px;text-align:center;font-size:9.5px;line-height:9.5px;color:#999;">12:00 am</div><div class="t" style="left:58.06px;top:183.26px;width:80px;text-align:center;font-size:9.5px;line-height:9.5px;color:#999;">Jun 28</div><div class="t" style="left:58.06px;top:198.26px;width:80px;text-align:center;font-size:9.5px;line-height:9.5px;color:#999;">12:00 am</div><div class="t" style="left:118.72px;top:183.26px;width:80px;text-align:center;font-size:9.5px;line-height:9.5px;color:#999;">Jun 30</div><div class="t" style="left:118.72px;top:198.26px;width:80px;text-align:center;font-size:9.5px;line-height:9.5px;color:#999;">12:00 am</div><div class="t" style="left:179.38px;top:183.26px;width:80px;text-align:center;font-size:9.5px;line-height:9.5px;color:#999;">Jul 2</div><div class="t" style="left:179.38px;top:198.26px;width:80px;text-align:center;font-size:9.5px;line-height:9.5px;color:#999;">12:00 am</div><div class="t" style="left:240.04px;top:183.26px;width:80px;text-align:center;font-size:9.5px;line-height:9.5px;color:#999;">Jul 4</div><div class="t" style="left:240.04px;top:198.26px;width:80px;text-align:center;font-size:9.5px;line-height:9.5px;color:#999;">12:00 am</div><div class="t" style="left:300.70px;top:183.26px;width:80px;text-align:center;font-size:9.5px;line-height:9.5px;color:#999;">Jul 6</div><div class="t" style="left:300.70px;top:198.26px;width:80px;text-align:center;font-size:9.5px;line-height:9.5px;color:#999;">12:00 am</div><div class="t" style="left:361.36px;top:183.26px;width:80px;text-align:center;font-size:9.5px;line-height:9.5px;color:#999;">Jul 8</div><div class="t" style="left:361.36px;top:198.26px;width:80px;text-align:center;font-size:9.5px;line-height:9.5px;color:#999;">12:00 am</div><div class="t" style="left:422.02px;top:183.26px;width:80px;text-align:center;font-size:9.5px;line-height:9.5px;color:#999;">Jul 10</div><div class="t" style="left:422.02px;top:198.26px;width:80px;text-align:center;font-size:9.5px;line-height:9.5px;color:#999;">12:00 am</div><div class="t" style="left:482.68px;top:183.26px;width:80px;text-align:center;font-size:9.5px;line-height:9.5px;color:#999;">Jul 12</div><div class="t" style="left:482.68px;top:198.26px;width:80px;text-align:center;font-size:9.5px;line-height:9.5px;color:#999;">12:00 am</div><div class="t" style="left:543.34px;top:183.26px;width:80px;text-align:center;font-size:9.5px;line-height:9.5px;color:#999;">Jul 14</div><div class="t" style="left:543.34px;top:198.26px;width:80px;text-align:center;font-size:9.5px;line-height:9.5px;color:#999;">12:00 am</div><div class="t" style="left:604.00px;top:183.26px;width:80px;text-align:center;font-size:9.5px;line-height:9.5px;color:#999;">Jul 16</div><div class="t" style="left:604.00px;top:198.26px;width:80px;text-align:center;font-size:9.5px;line-height:9.5px;color:#999;">12:00 am</div><div class="t" style="left:664.66px;top:183.26px;width:80px;text-align:center;font-size:9.5px;line-height:9.5px;color:#999;">Jul 18</div><div class="t" style="left:664.66px;top:198.26px;width:80px;text-align:center;font-size:9.5px;line-height:9.5px;color:#999;">12:00 am</div><div class="t" style="left:725.32px;top:183.26px;width:80px;text-align:center;font-size:9.5px;line-height:9.5px;color:#999;">Jul 20</div><div class="t" style="left:725.32px;top:198.26px;width:80px;text-align:center;font-size:9.5px;line-height:9.5px;color:#999;">12:00 am</div><div class="t" style="left:785.98px;top:183.26px;width:80px;text-align:center;font-size:9.5px;line-height:9.5px;color:#999;">Jul 22</div><div class="t" style="left:785.98px;top:198.26px;width:80px;text-align:center;font-size:9.5px;line-height:9.5px;color:#999;">12:00 am</div><div class="t" style="left:842.14px;top:183.26px;width:80px;text-align:center;font-size:9.5px;line-height:9.5px;color:#999;">Jul 24</div><div class="t" style="left:842.14px;top:198.26px;width:80px;text-align:center;font-size:9.5px;line-height:9.5px;color:#999;">12:00 am</div></div>
<div class="r" style="left:23.20px;top:490.00px;width:214.10px;height:35.00px;background:#fff;border:1px solid #c8c8c8;border-radius:6px;"></div>
<svg class="r" style="left:34.00px;top:499.00px;" width="16.00" height="16.00" viewBox="0 0 16.00 16.00"><circle cx="6.3" cy="6.3" r="4.6" fill="none" stroke="#222" stroke-width="2.2"/><path d="M9.6 9.6 L13.2 13.2" stroke="#222" stroke-width="2.6" stroke-linecap="round"/></svg>
<div id="t39" class="t" style="left:59.50px;top:499.52px;font-size:14.50px;line-height:14.50px;color:#999;font-weight:400;font-family:'Liberation Sans', sans-serif;transform:scaleX(0.9591);transform-origin:left center;">Search</div>
<div class="r" style="left:228.40px;top:536.00px;width:14.60px;height:544.00px;background:#f9f9f9;"></div>
<svg class="r" style="left:229.00px;top:542.00px;" width="12.00" height="7.00" viewBox="0 0 12.00 7.00"><path d="M6 0.5 L11 6 L1 6 Z" fill="#999"/></svg>
<div class="r" style="left:230.00px;top:556.00px;width:10.00px;height:398.00px;background:#8a8a8a;border-radius:5px;"></div>
<div class="r" style="left:23.20px;top:536.40px;width:203.80px;height:80.60px;background:#fff;border:1px solid #dfe2ea;"></div>
<div class="r" style="left:24.20px;top:537.40px;width:201.80px;height:34.60px;background:#f4f4f4;"></div>
<svg class="r" style="left:34.00px;top:549.40px;" width="12.00" height="8.50" viewBox="0 0 12.00 8.50"><path d="M1.5 1.5 L5.5 5.5 L9.5 1.5" fill="none" stroke="#333" stroke-width="1.5"/></svg>
<div id="t40" class="t" style="left:50.70px;top:547.05px;font-size:14.00px;line-height:14.00px;color:#333;font-weight:700;font-family:'Liberation Sans', sans-serif;transform:scaleX(1.0175);transform-origin:left center;">Host</div>
<svg class="r" style="left:35.00px;top:587.00px;" width="13.00" height="13.00" viewBox="0 0 13.00 13.00"><rect x="0" y="0" width="13" height="13" rx="2.2" fill="#0b6efd"/><path d="M3 6.8 L5.6 9.4 L10.3 3.8" fill="none" stroke="#fff" stroke-width="1.9"/></svg>
<div id="t41" class="t" style="left:54.80px;top:585.82px;font-size:14.50px;line-height:14.50px;color:#333;font-weight:400;font-family:'Liberation Sans', sans-serif;transform:scaleX(1.0234);transform-origin:left center;">26ab4b1a44bf</div>
<div id="t42" class="t" style="right:1711.64px;top:585.82px;font-size:14.50px;line-height:14.50px;color:#666;font-weight:400;font-family:'Liberation Sans', sans-serif;transform:scaleX(0.9822);transform-origin:right center;">267</div>
<div class="r" style="left:23.20px;top:622.30px;width:203.80px;height:139.20px;background:#fff;border:1px solid #dfe2ea;"></div>
<div class="r" style="left:24.20px;top:623.30px;width:201.80px;height:34.20px;background:#f4f4f4;"></div>
<svg class="r" style="left:34.00px;top:635.30px;" width="12.00" height="8.50" viewBox="0 0 12.00 8.50"><path d="M1.5 1.5 L5.5 5.5 L9.5 1.5" fill="none" stroke="#333" stroke-width="1.5"/></svg>
<div id="t43" class="t" style="left:50.70px;top:633.35px;font-size:14.00px;line-height:14.00px;color:#333;font-weight:700;font-family:'Liberation Sans', sans-serif;transform:scaleX(1.0437);transform-origin:left center;">Database</div>
<svg class="r" style="left:35.00px;top:673.00px;" width="13.00" height="13.00" viewBox="0 0 13.00 13.00"><rect x="0" y="0" width="13" height="13" rx="2.2" fill="#0b6efd"/><path d="M3 6.8 L5.6 9.4 L10.3 3.8" fill="none" stroke="#fff" stroke-width="1.9"/></svg>
<div id="t44" class="t" style="left:54.80px;top:671.82px;font-size:14.50px;line-height:14.50px;color:#333;font-weight:400;font-family:'Liberation Sans', sans-serif;transform:scaleX(0.9243);transform-origin:left center;">CDB$ROOT</div>
<div id="t45" class="t" style="right:1711.64px;top:671.82px;font-size:14.50px;line-height:14.50px;color:#666;font-weight:400;font-family:'Liberation Sans', sans-serif;transform:scaleX(0.9740);transform-origin:right center;">246</div>
<svg class="r" style="left:35.00px;top:702.80px;" width="13.00" height="13.00" viewBox="0 0 13.00 13.00"><rect x="0" y="0" width="13" height="13" rx="2.2" fill="#0b6efd"/><path d="M3 6.8 L5.6 9.4 L10.3 3.8" fill="none" stroke="#fff" stroke-width="1.9"/></svg>
<div id="t46" class="t" style="left:54.80px;top:701.62px;font-size:14.50px;line-height:14.50px;color:#333;font-weight:400;font-family:'Liberation Sans', sans-serif;transform:scaleX(0.8853);transform-origin:left center;">XEPDB1</div>
<div id="t47" class="t" style="right:1711.64px;top:701.62px;font-size:14.50px;line-height:14.50px;color:#666;font-weight:400;font-family:'Liberation Sans', sans-serif;transform:scaleX(0.9649);transform-origin:right center;">76</div>
<svg class="r" style="left:35.00px;top:732.00px;" width="13.00" height="13.00" viewBox="0 0 13.00 13.00"><rect x="0" y="0" width="13" height="13" rx="2.2" fill="#0b6efd"/><path d="M3 6.8 L5.6 9.4 L10.3 3.8" fill="none" stroke="#fff" stroke-width="1.9"/></svg>
<div id="t48" class="t" style="left:53.89px;top:730.82px;font-size:14.50px;line-height:14.50px;color:#333;font-weight:400;font-family:'Liberation Sans', sans-serif;transform:scaleX(0.9145);transform-origin:left center;">PDB$SEED</div>
<div id="t49" class="t" style="right:1711.64px;top:730.82px;font-size:14.50px;line-height:14.50px;color:#666;font-weight:400;font-family:'Liberation Sans', sans-serif;transform:scaleX(0.9500);transform-origin:right center;">3</div>
<div class="r" style="left:23.20px;top:767.60px;width:203.80px;height:322.40px;background:#fff;border:1px solid #dfe2ea;"></div>
<div class="r" style="left:24.20px;top:768.60px;width:201.80px;height:34.40px;background:#f4f4f4;"></div>
<svg class="r" style="left:34.00px;top:780.60px;" width="12.00" height="8.50" viewBox="0 0 12.00 8.50"><path d="M1.5 1.5 L5.5 5.5 L9.5 1.5" fill="none" stroke="#333" stroke-width="1.5"/></svg>
<div id="t50" class="t" style="left:50.70px;top:778.15px;font-size:14.00px;line-height:14.00px;color:#333;font-weight:700;font-family:'Liberation Sans', sans-serif;transform:scaleX(1.0492);transform-origin:left center;">Table</div>
<div class="r" style="left:35.20px;top:812.40px;width:179.80px;height:29.20px;background:#fff;border:1px solid #cdcdcd;border-radius:2px;"></div>
<svg class="r" style="left:45.50px;top:819.00px;" width="16.50" height="16.00" viewBox="0 0 16.50 16.00"><circle cx="6.6" cy="6.3" r="4.6" fill="none" stroke="#222" stroke-width="2.2"/><path d="M9.9 9.6 L13.5 13.2" stroke="#222" stroke-width="2.6" stroke-linecap="round"/></svg>
<div id="t51" class="t" style="left:70.38px;top:819.02px;font-size:14.50px;line-height:14.50px;color:#999;font-weight:400;font-family:'Liberation Sans', sans-serif;transform:scaleX(1.0245);transform-origin:left center;">Filter values</div>
<div class="r" style="left:199.30px;top:852.00px;width:15.70px;height:228.00px;background:#f9f9f9;"></div>
<svg class="r" style="left:201.00px;top:858.00px;" width="12.00" height="7.00" viewBox="0 0 12.00 7.00"><path d="M6 0.5 L11 6 L1 6 Z" fill="#999"/></svg>
<div class="r" style="left:202.00px;top:872.00px;width:10.00px;height:18.00px;background:#8a8a8a;border-radius:5px;"></div>
<svg class="r" style="left:35.00px;top:858.00px;" width="13.00" height="13.00" viewBox="0 0 13.00 13.00"><rect x="0" y="0" width="13" height="13" rx="2.2" fill="#0b6efd"/><path d="M3 6.8 L5.6 9.4 L10.3 3.8" fill="none" stroke="#fff" stroke-width="1.9"/></svg>
<div id="t52" class="t" style="left:54.80px;top:856.82px;font-size:14.50px;line-height:14.50px;color:#333;font-weight:400;font-family:'Liberation Sans', sans-serif;transform:scaleX(1.0494);transform-origin:left center;">obj$</div>
<div id="t53" class="t" style="right:1727.44px;top:856.82px;font-size:14.50px;line-height:14.50px;color:#666;font-weight:400;font-family:'Liberation Sans', sans-serif;transform:scaleX(0.9161);transform-origin:right center;">10</div>
<svg class="r" style="left:35.00px;top:887.60px;" width="13.00" height="13.00" viewBox="0 0 13.00 13.00"><rect x="0" y="0" width="13" height="13" rx="2.2" fill="#0b6efd"/><path d="M3 6.8 L5.6 9.4 L10.3 3.8" fill="none" stroke="#fff" stroke-width="1.9"/></svg>
<div id="t54" class="t" style="left:54.80px;top:886.42px;font-size:14.50px;line-height:14.50px;color:#333;font-weight:400;font-family:'Liberation Sans', sans-serif;transform:scaleX(0.9987);transform-origin:left center;">col$</div>
<div id="t55" class="t" style="right:1727.44px;top:886.42px;font-size:14.50px;line-height:14.50px;color:#666;font-weight:400;font-family:'Liberation Sans', sans-serif;transform:scaleX(0.9375);transform-origin:right center;">8</div>
<svg class="r" style="left:35.00px;top:917.20px;" width="13.00" height="13.00" viewBox="0 0 13.00 13.00"><rect x="0" y="0" width="13" height="13" rx="2.2" fill="#0b6efd"/><path d="M3 6.8 L5.6 9.4 L10.3 3.8" fill="none" stroke="#fff" stroke-width="1.9"/></svg>
<div id="t56" class="t" style="left:53.74px;top:916.02px;font-size:14.50px;line-height:14.50px;color:#333;font-weight:400;font-family:'Liberation Sans', sans-serif;transform:scaleX(1.0566);transform-origin:left center;">None</div>
<div id="t57" class="t" style="right:1727.44px;top:916.02px;font-size:14.50px;line-height:14.50px;color:#666;font-weight:400;font-family:'Liberation Sans', sans-serif;transform:scaleX(0.8750);transform-origin:right center;">7</div>
<svg class="r" style="left:35.00px;top:946.80px;" width="13.00" height="13.00" viewBox="0 0 13.00 13.00"><rect x="0" y="0" width="13" height="13" rx="2.2" fill="#0b6efd"/><path d="M3 6.8 L5.6 9.4 L10.3 3.8" fill="none" stroke="#fff" stroke-width="1.9"/></svg>
<div id="t58" class="t" style="left:54.80px;top:945.62px;font-size:14.50px;line-height:14.50px;color:#333;font-weight:400;font-family:'Liberation Sans', sans-serif;transform:scaleX(0.9880);transform-origin:left center;">idl_sb4$</div>
<div id="t59" class="t" style="right:1727.44px;top:945.62px;font-size:14.50px;line-height:14.50px;color:#666;font-weight:400;font-family:'Liberation Sans', sans-serif;transform:scaleX(0.9125);transform-origin:right center;">6</div>
<svg class="r" style="left:35.00px;top:976.40px;" width="13.00" height="13.00" viewBox="0 0 13.00 13.00"><rect x="0" y="0" width="13" height="13" rx="2.2" fill="#0b6efd"/><path d="M3 6.8 L5.6 9.4 L10.3 3.8" fill="none" stroke="#fff" stroke-width="1.9"/></svg>
<div id="t60" class="t" style="left:54.80px;top:975.22px;font-size:14.50px;line-height:14.50px;color:#333;font-weight:400;font-family:'Liberation Sans', sans-serif;transform:scaleX(1.0835);transform-origin:left center;">trigger$</div>
<div id="t61" class="t" style="right:1727.44px;top:975.22px;font-size:14.50px;line-height:14.50px;color:#666;font-weight:400;font-family:'Liberation Sans', sans-serif;transform:scaleX(0.9125);transform-origin:right center;">6</div>
<svg class="r" style="left:35.00px;top:1006.00px;" width="13.00" height="13.00" viewBox="0 0 13.00 13.00"><rect x="0" y="0" width="13" height="13" rx="2.2" fill="#0b6efd"/><path d="M3 6.8 L5.6 9.4 L10.3 3.8" fill="none" stroke="#fff" stroke-width="1.9"/></svg>
<div id="t62" class="t" style="left:54.80px;top:1004.82px;font-size:14.50px;line-height:14.50px;color:#333;font-weight:400;font-family:'Liberation Sans', sans-serif;transform:scaleX(1.0166);transform-origin:left center;">con$</div>
<div id="t63" class="t" style="right:1727.44px;top:1004.82px;font-size:14.50px;line-height:14.50px;color:#666;font-weight:400;font-family:'Liberation Sans', sans-serif;transform:scaleX(0.9125);transform-origin:right center;">6</div>
<svg class="r" style="left:35.00px;top:1035.60px;" width="13.00" height="13.00" viewBox="0 0 13.00 13.00"><rect x="0" y="0" width="13" height="13" rx="2.2" fill="#0b6efd"/><path d="M3 6.8 L5.6 9.4 L10.3 3.8" fill="none" stroke="#fff" stroke-width="1.9"/></svg>
<div id="t64" class="t" style="left:54.80px;top:1034.42px;font-size:14.50px;line-height:14.50px;color:#333;font-weight:400;font-family:'Liberation Sans', sans-serif;transform:scaleX(1.0134);transform-origin:left center;">idl_ub1$</div>
<div id="t65" class="t" style="right:1727.44px;top:1034.42px;font-size:14.50px;line-height:14.50px;color:#666;font-weight:400;font-family:'Liberation Sans', sans-serif;transform:scaleX(0.9125);transform-origin:right center;">6</div>
<svg class="r" style="left:35.00px;top:1065.20px;" width="13.00" height="13.00" viewBox="0 0 13.00 13.00"><rect x="0" y="0" width="13" height="13" rx="2.2" fill="#0b6efd"/><path d="M3 6.8 L5.6 9.4 L10.3 3.8" fill="none" stroke="#fff" stroke-width="1.9"/></svg>
<div id="t66" class="t" style="left:54.80px;top:1064.02px;font-size:14.50px;line-height:14.50px;color:#333;font-weight:400;font-family:'Liberation Sans', sans-serif;transform:scaleX(1.0091);transform-origin:left center;">sysauth$</div>
<div id="t67" class="t" style="right:1727.44px;top:1064.02px;font-size:14.50px;line-height:14.50px;color:#666;font-weight:400;font-family:'Liberation Sans', sans-serif;transform:scaleX(0.9125);transform-origin:right center;">5</div>
<div id="t68" class="t" style="left:260.00px;top:507.51px;font-size:17.00px;line-height:17.00px;color:#333;font-weight:700;font-family:'Liberation Sans', sans-serif;transform:scaleX(0.9638);transform-origin:left center;">267</div>
<div id="t69" class="t" style="left:290.86px;top:507.51px;font-size:17.00px;line-height:17.00px;color:#333;font-weight:400;font-family:'Liberation Sans', sans-serif;transform:scaleX(1.0383);transform-origin:left center;">result found.</div>
<div class="r" style="left:1482.60px;top:499.60px;width:293.10px;height:29.80px;background:#fff;border:1px solid #dcdcdc;border-radius:4px;"></div>
<div class="r" style="left:1622.70px;top:500.00px;width:1.00px;height:29.00px;background:#dcdcdc;"></div>
<div class="r" style="left:1654.10px;top:500.00px;width:1.00px;height:29.00px;background:#dcdcdc;"></div>
<div class="r" style="left:1686.90px;top:500.00px;width:1.00px;height:29.00px;background:#dcdcdc;"></div>
<div class="r" style="left:1717.20px;top:500.00px;width:1.00px;height:29.00px;background:#dcdcdc;"></div>
<div class="r" style="left:1563.30px;top:499.60px;width:30.60px;height:29.80px;background:#3c86c8;"></div>
<div id="t70" class="t" style="left:1493.60px;top:507.55px;font-size:14.00px;line-height:14.00px;color:#9a9a9a;font-weight:400;font-family:'Liberation Sans', sans-serif;transform:scaleX(0.9251);transform-origin:left center;">‹ Previous</div>
<div id="t71" class="t" style="left:1574.44px;top:507.55px;font-size:14.00px;line-height:14.00px;color:#fff;font-weight:400;font-family:'Liberation Sans', sans-serif;transform:scaleX(0.8571);transform-origin:left center;">1</div>
<div id="t72" class="t" style="left:1604.90px;top:507.55px;font-size:14.00px;line-height:14.00px;color:#3379b8;font-weight:400;font-family:'Liberation Sans', sans-serif;transform:scaleX(1.0000);transform-origin:left center;">2</div>
<div id="t73" class="t" style="left:1635.20px;top:507.55px;font-size:14.00px;line-height:14.00px;color:#3379b8;font-weight:400;font-family:'Liberation Sans', sans-serif;transform:scaleX(0.9750);transform-origin:left center;">3</div>
<div id="t74" class="t" style="left:1664.44px;top:508.39px;font-size:13.00px;line-height:13.00px;color:#3379b8;font-weight:400;font-family:'Liberation Sans', sans-serif;transform:scaleX(0.8636);transform-origin:left center;">…</div>
<div id="t75" class="t" style="left:1697.90px;top:507.55px;font-size:14.00px;line-height:14.00px;color:#3379b8;font-weight:400;font-family:'Liberation Sans', sans-serif;transform:scaleX(1.0000);transform-origin:left center;">6</div>
<div id="t76" class="t" style="left:1728.24px;top:507.55px;font-size:14.00px;line-height:14.00px;color:#3379b8;font-weight:400;font-family:'Liberation Sans', sans-serif;transform:scaleX(0.9570);transform-origin:left center;">Next ›</div>
<div class="r" style="left:1798.70px;top:499.20px;width:83.50px;height:30.20px;background:#f9f9f8;border:1px solid #cdcdcd;border-bottom-color:#b8b8b8;border-radius:3px;"></div>
<svg class="r" style="left:1809.50px;top:507.80px;" width="11.00" height="11.40" viewBox="0 0 11.00 11.40"><g fill="#222" transform="translate(5.5 5.7)">
<circle r="3.7"/>
<rect x="-1.2" y="-5.3" width="2.4" height="10.6"/>
<rect x="-1.2" y="-5.3" width="2.4" height="10.6" transform="rotate(45)"/>
<rect x="-1.2" y="-5.3" width="2.4" height="10.6" transform="rotate(90)"/>
<rect x="-1.2" y="-5.3" width="2.4" height="10.6" transform="rotate(135)"/>
</g><circle cx="5.5" cy="5.7" r="1.75" fill="#f9f9f8"/></svg>
<div id="t77" class="t" style="left:1826.00px;top:506.55px;font-size:14.00px;line-height:14.00px;color:#333;font-weight:400;font-family:'Liberation Sans', sans-serif;transform:scaleX(0.9161);transform-origin:left center;">Options</div>
<div class="r" style="left:260.40px;top:574.40px;width:1622.00px;height:505.60px;background:#fff;border-left:1px solid #eceef3;border-right:1px solid #eceef3;"></div>
<div class="r" style="left:260.40px;top:574.60px;width:1621.20px;height:31.62px;background:#eef0f4;"></div>
<div class="r" style="left:260.40px;top:606.12px;width:1621.20px;height:1.00px;background:#dcdcdc;"></div>
<div class="t" style="left:281px;top:583.87px;width:863px;overflow:hidden;font-family:'Liberation Mono', monospace;font-size:14px;line-height:14px;color:#333;letter-spacing:-0.03px;"><span class="kw">select</span> col#<span class="op">,</span>intcol#<span class="op">,</span>charsetid<span class="op">,</span>charsetform <span class="kw">from</span> col$ <span class="kw">where</span> obj#<span class="op">=</span><span class="op">:</span><span class="nu">1</span> <span class="kw">order</span> <span class="kw">by</span> intcol# <span class="kw">asc</span></div>
<div id="t79" class="t" style="left:1165.50px;top:582.58px;font-size:14.20px;line-height:14.20px;color:#333;font-weight:400;font-family:'Liberation Sans', sans-serif;">67</div>
<div id="t80" class="t" style="left:1264.00px;top:582.58px;font-size:14.20px;line-height:14.20px;color:#333;font-weight:400;font-family:'Liberation Sans', sans-serif;">9.44 ms</div>
<div id="t81" class="t" style="left:1417.20px;top:582.58px;font-size:14.20px;line-height:14.20px;color:#333;font-weight:400;font-family:'Liberation Sans', sans-serif;">140.93 μs</div>
<div id="t82" class="t" style="left:1555.70px;top:582.58px;font-size:14.20px;line-height:14.20px;color:#333;font-weight:400;font-family:'Liberation Sans', sans-serif;">26.36</div>
<div id="t83" class="t" style="left:1700.20px;top:582.58px;font-size:14.20px;line-height:14.20px;color:#333;font-weight:400;font-family:'Liberation Sans', sans-serif;">27.36</div>
<div class="r" style="left:260.40px;top:637.74px;width:1621.20px;height:1.00px;background:#dcdcdc;"></div>
<div class="t" style="left:281px;top:615.49px;width:863px;overflow:hidden;font-family:'Liberation Mono', monospace;font-size:14px;line-height:14px;color:#333;letter-spacing:-0.03px;"><span class="kw">select</span> <span class="kw">procedure</span>#<span class="op">,</span>procedurename<span class="op">,</span>properties<span class="op">,</span>itypeobj#<span class="op">,</span> properties2 <span class="kw">from</span> procedureinfo$ <span class="kw">where</span> obj#<span class="op">=</span><span class="op">:</span><span class="nu">1</span> <span class="kw">ord</span></div>
<div id="t85" class="t" style="left:1165.50px;top:614.20px;font-size:14.20px;line-height:14.20px;color:#333;font-weight:400;font-family:'Liberation Sans', sans-serif;">106</div>
<div id="t86" class="t" style="left:1264.00px;top:614.20px;font-size:14.20px;line-height:14.20px;color:#333;font-weight:400;font-family:'Liberation Sans', sans-serif;">16.69 ms</div>
<div id="t87" class="t" style="left:1417.20px;top:614.20px;font-size:14.20px;line-height:14.20px;color:#333;font-weight:400;font-family:'Liberation Sans', sans-serif;">157.42 μs</div>
<div id="t88" class="t" style="left:1555.70px;top:614.20px;font-size:14.20px;line-height:14.20px;color:#333;font-weight:400;font-family:'Liberation Sans', sans-serif;">22.52</div>
<div id="t89" class="t" style="left:1700.20px;top:614.20px;font-size:14.20px;line-height:14.20px;color:#333;font-weight:400;font-family:'Liberation Sans', sans-serif;">23.52</div>
<div class="r" style="left:260.40px;top:669.36px;width:1621.20px;height:1.00px;background:#dcdcdc;"></div>
<div class="t" style="left:281px;top:647.11px;width:863px;overflow:hidden;font-family:'Liberation Mono', monospace;font-size:14px;line-height:14px;color:#333;letter-spacing:-0.03px;"><span class="kw">select</span> size_for_estimate<span class="op">,</span> size_factor <span class="op">*</span> <span class="nu">100</span> f<span class="op">,</span> estd_physical_read_time<span class="op">,</span> estd_physical_reads <span class="kw">from</span> v$db_c</div>
<div id="t91" class="t" style="left:1165.50px;top:645.82px;font-size:14.20px;line-height:14.20px;color:#333;font-weight:400;font-family:'Liberation Sans', sans-serif;">1.4K</div>
<div id="t92" class="t" style="left:1264.00px;top:645.82px;font-size:14.20px;line-height:14.20px;color:#333;font-weight:400;font-family:'Liberation Sans', sans-serif;">823.6 ms</div>
<div id="t93" class="t" style="left:1417.20px;top:645.82px;font-size:14.20px;line-height:14.20px;color:#333;font-weight:400;font-family:'Liberation Sans', sans-serif;">586.61 μs</div>
<div id="t94" class="t" style="left:1555.70px;top:645.82px;font-size:14.20px;line-height:14.20px;color:#333;font-weight:400;font-family:'Liberation Sans', sans-serif;">21</div>
<div id="t95" class="t" style="left:1700.20px;top:645.82px;font-size:14.20px;line-height:14.20px;color:#333;font-weight:400;font-family:'Liberation Sans', sans-serif;">22</div>
<div class="r" style="left:260.40px;top:700.98px;width:1621.20px;height:1.00px;background:#dcdcdc;"></div>
<div class="t" style="left:281px;top:678.73px;width:863px;overflow:hidden;font-family:'Liberation Mono', monospace;font-size:14px;line-height:14px;color:#333;letter-spacing:-0.03px;"><span class="kw">select</span> group_tbid_kewrtbgm<span class="op">,</span> member_tbid_kewrtbgm <span class="kw">from</span> <span class="op">(</span><span class="kw">select</span> <span class="op">*</span> <span class="kw">from</span> x$kewrtbgm <span class="kw">where</span> con_id <span class="op">=</span> <span class="op">:</span>con_id_</div>
<div id="t97" class="t" style="left:1165.50px;top:677.44px;font-size:14.20px;line-height:14.20px;color:#333;font-weight:400;font-family:'Liberation Sans', sans-serif;">2</div>
<div id="t98" class="t" style="left:1264.00px;top:677.44px;font-size:14.20px;line-height:14.20px;color:#333;font-weight:400;font-family:'Liberation Sans', sans-serif;">512 μs</div>
<div id="t99" class="t" style="left:1417.20px;top:677.44px;font-size:14.20px;line-height:14.20px;color:#333;font-weight:400;font-family:'Liberation Sans', sans-serif;">256 μs</div>
<div id="t100" class="t" style="left:1555.70px;top:677.44px;font-size:14.20px;line-height:14.20px;color:#333;font-weight:400;font-family:'Liberation Sans', sans-serif;">21</div>
<div id="t101" class="t" style="left:1700.20px;top:677.44px;font-size:14.20px;line-height:14.20px;color:#333;font-weight:400;font-family:'Liberation Sans', sans-serif;">22</div>
<div class="r" style="left:260.40px;top:732.60px;width:1621.20px;height:1.00px;background:#dcdcdc;"></div>
<div class="t" style="left:281px;top:710.35px;width:863px;overflow:hidden;font-family:'Liberation Mono', monospace;font-size:14px;line-height:14px;color:#333;letter-spacing:-0.03px;"><span class="kw">select</span> shared_pool_size_for_estimate s<span class="op">,</span> shared_pool_size_factor <span class="op">*</span> <span class="nu">100</span> f<span class="op">,</span> estd_lc_load_time l<span class="op">,</span> <span class="nu">0</span> <span class="kw">from</span> v</div>
<div id="t103" class="t" style="left:1165.50px;top:709.06px;font-size:14.20px;line-height:14.20px;color:#333;font-weight:400;font-family:'Liberation Sans', sans-serif;">1.4K</div>
<div id="t104" class="t" style="left:1264.00px;top:709.06px;font-size:14.20px;line-height:14.20px;color:#333;font-weight:400;font-family:'Liberation Sans', sans-serif;">1.03 s</div>
<div id="t105" class="t" style="left:1417.20px;top:709.06px;font-size:14.20px;line-height:14.20px;color:#333;font-weight:400;font-family:'Liberation Sans', sans-serif;">736.14 μs</div>
<div id="t106" class="t" style="left:1555.70px;top:709.06px;font-size:14.20px;line-height:14.20px;color:#333;font-weight:400;font-family:'Liberation Sans', sans-serif;">17.81</div>
<div id="t107" class="t" style="left:1700.20px;top:709.06px;font-size:14.20px;line-height:14.20px;color:#333;font-weight:400;font-family:'Liberation Sans', sans-serif;">18.81</div>
<div class="r" style="left:260.40px;top:764.22px;width:1621.20px;height:1.00px;background:#dcdcdc;"></div>
<div class="t" style="left:281px;top:741.97px;width:863px;overflow:hidden;font-family:'Liberation Mono', monospace;font-size:14px;line-height:14px;color:#333;letter-spacing:-0.03px;"><span class="kw">select</span> <span class="kw">procedure</span>#<span class="op">,</span>entrypoint# <span class="kw">from</span> procedureplsql$ <span class="kw">where</span> obj#<span class="op">=</span><span class="op">:</span><span class="nu">1</span> <span class="kw">order</span> <span class="kw">by</span> <span class="kw">procedure</span></div>
<div id="t109" class="t" style="left:1165.50px;top:740.68px;font-size:14.20px;line-height:14.20px;color:#333;font-weight:400;font-family:'Liberation Sans', sans-serif;">120</div>
<div id="t110" class="t" style="left:1264.00px;top:740.68px;font-size:14.20px;line-height:14.20px;color:#333;font-weight:400;font-family:'Liberation Sans', sans-serif;">12.26 ms</div>
<div id="t111" class="t" style="left:1417.20px;top:740.68px;font-size:14.20px;line-height:14.20px;color:#333;font-weight:400;font-family:'Liberation Sans', sans-serif;">102.14 μs</div>
<div id="t112" class="t" style="left:1555.70px;top:740.68px;font-size:14.20px;line-height:14.20px;color:#333;font-weight:400;font-family:'Liberation Sans', sans-serif;">15.23</div>
<div id="t113" class="t" style="left:1700.20px;top:740.68px;font-size:14.20px;line-height:14.20px;color:#333;font-weight:400;font-family:'Liberation Sans', sans-serif;">16.23</div>
<div class="r" style="left:260.40px;top:795.84px;width:1621.20px;height:1.00px;background:#dcdcdc;"></div>
<div class="t" style="left:281px;top:773.59px;width:863px;overflow:hidden;font-family:'Liberation Mono', monospace;font-size:14px;line-height:14px;color:#333;letter-spacing:-0.03px;"><span class="kw">select</span> name<span class="op">,</span> type#<span class="op">,</span> property <span class="kw">from</span> col$ <span class="kw">where</span> obj#<span class="op">=</span><span class="op">:</span><span class="nu">1</span></div>
<div id="t115" class="t" style="left:1165.50px;top:772.30px;font-size:14.20px;line-height:14.20px;color:#333;font-weight:400;font-family:'Liberation Sans', sans-serif;">8</div>
<div id="t116" class="t" style="left:1264.00px;top:772.30px;font-size:14.20px;line-height:14.20px;color:#333;font-weight:400;font-family:'Liberation Sans', sans-serif;">1.02 ms</div>
<div id="t117" class="t" style="left:1417.20px;top:772.30px;font-size:14.20px;line-height:14.20px;color:#333;font-weight:400;font-family:'Liberation Sans', sans-serif;">127.5 μs</div>
<div id="t118" class="t" style="left:1555.70px;top:772.30px;font-size:14.20px;line-height:14.20px;color:#333;font-weight:400;font-family:'Liberation Sans', sans-serif;">15</div>
<div id="t119" class="t" style="left:1700.20px;top:772.30px;font-size:14.20px;line-height:14.20px;color:#333;font-weight:400;font-family:'Liberation Sans', sans-serif;">16</div>
<div class="r" style="left:260.40px;top:827.46px;width:1621.20px;height:1.00px;background:#dcdcdc;"></div>
<div class="t" style="left:281px;top:805.21px;width:863px;overflow:hidden;font-family:'Liberation Mono', monospace;font-size:14px;line-height:14px;color:#333;letter-spacing:-0.03px;"><span class="kw">select</span> name<span class="op">,</span>intcol#<span class="op">,</span>segcol#<span class="op">,</span>type#<span class="op">,</span>length<span class="op">,</span><span class="fn">nvl</span><span class="op">(</span>precision#<span class="op">,</span><span class="nu">0</span><span class="op">)</span><span class="op">,</span><span class="fn">decode</span><span class="op">(</span>type#<span class="op">,</span><span class="nu">2</span><span class="op">,</span><span class="fn">nvl</span><span class="op">(</span>scale<span class="op">,</span><span class="nu">-127</span><span class="op">/</span><span class="op">*</span>MAXSB1MINAL</div>
<div id="t121" class="t" style="left:1165.50px;top:803.92px;font-size:14.20px;line-height:14.20px;color:#333;font-weight:400;font-family:'Liberation Sans', sans-serif;">1.2K</div>
<div id="t122" class="t" style="left:1264.00px;top:803.92px;font-size:14.20px;line-height:14.20px;color:#333;font-weight:400;font-family:'Liberation Sans', sans-serif;">136.27 ms</div>
<div id="t123" class="t" style="left:1417.20px;top:803.92px;font-size:14.20px;line-height:14.20px;color:#333;font-weight:400;font-family:'Liberation Sans', sans-serif;">117.27 μs</div>
<div id="t124" class="t" style="left:1555.70px;top:803.92px;font-size:14.20px;line-height:14.20px;color:#333;font-weight:400;font-family:'Liberation Sans', sans-serif;">14.73</div>
<div id="t125" class="t" style="left:1700.20px;top:803.92px;font-size:14.20px;line-height:14.20px;color:#333;font-weight:400;font-family:'Liberation Sans', sans-serif;">15.73</div>
<div class="r" style="left:260.40px;top:859.08px;width:1621.20px;height:1.00px;background:#dcdcdc;"></div>
<div class="t" style="left:281px;top:836.83px;width:863px;overflow:hidden;font-family:'Liberation Mono', monospace;font-size:14px;line-height:14px;color:#333;letter-spacing:-0.03px;"><span class="kw">select</span> <span class="st">&#x27;&quot;&#x27;</span>||name||<span class="st">&#x27;&quot; &#x27;</span>||<span class="fn">decode</span><span class="op">(</span>type#<span class="op">,</span><span class="nu">1</span><span class="op">,</span><span class="fn">decode</span><span class="op">(</span>charsetform<span class="op">,</span><span class="nu">2</span><span class="op">,</span><span class="st">&#x27;NVARCHAR2(&#x27;</span>||<span class="fn">decode</span><span class="op">(</span><span class="fn">bitand</span><span class="op">(</span>property<span class="op">,</span><span class="nu">838860</span></div>
<div id="t127" class="t" style="left:1165.50px;top:835.54px;font-size:14.20px;line-height:14.20px;color:#333;font-weight:400;font-family:'Liberation Sans', sans-serif;">4</div>
<div id="t128" class="t" style="left:1264.00px;top:835.54px;font-size:14.20px;line-height:14.20px;color:#333;font-weight:400;font-family:'Liberation Sans', sans-serif;">1.15 ms</div>
<div id="t129" class="t" style="left:1417.20px;top:835.54px;font-size:14.20px;line-height:14.20px;color:#333;font-weight:400;font-family:'Liberation Sans', sans-serif;">287.5 μs</div>
<div id="t130" class="t" style="left:1555.70px;top:835.54px;font-size:14.20px;line-height:14.20px;color:#333;font-weight:400;font-family:'Liberation Sans', sans-serif;">14</div>
<div id="t131" class="t" style="left:1700.20px;top:835.54px;font-size:14.20px;line-height:14.20px;color:#333;font-weight:400;font-family:'Liberation Sans', sans-serif;">15</div>
<div class="r" style="left:260.40px;top:890.70px;width:1621.20px;height:1.00px;background:#dcdcdc;"></div>
<div class="t" style="left:281px;top:868.45px;width:863px;overflow:hidden;font-family:'Liberation Mono', monospace;font-size:14px;line-height:14px;color:#333;letter-spacing:-0.03px;"><span class="kw">select</span> <span class="kw">order</span>#<span class="op">,</span>columns<span class="op">,</span>types <span class="kw">from</span> access$ <span class="kw">where</span> d_obj#<span class="op">=</span><span class="op">:</span><span class="nu">1</span></div>
<div id="t133" class="t" style="left:1165.50px;top:867.16px;font-size:14.20px;line-height:14.20px;color:#333;font-weight:400;font-family:'Liberation Sans', sans-serif;">263</div>
<div id="t134" class="t" style="left:1264.00px;top:867.16px;font-size:14.20px;line-height:14.20px;color:#333;font-weight:400;font-family:'Liberation Sans', sans-serif;">24.74 ms</div>
<div id="t135" class="t" style="left:1417.20px;top:867.16px;font-size:14.20px;line-height:14.20px;color:#333;font-weight:400;font-family:'Liberation Sans', sans-serif;">94.05 μs</div>
<div id="t136" class="t" style="left:1555.70px;top:867.16px;font-size:14.20px;line-height:14.20px;color:#333;font-weight:400;font-family:'Liberation Sans', sans-serif;">11.11</div>
<div id="t137" class="t" style="left:1700.20px;top:867.16px;font-size:14.20px;line-height:14.20px;color:#333;font-weight:400;font-family:'Liberation Sans', sans-serif;">12.11</div>
<div class="r" style="left:260.40px;top:922.32px;width:1621.20px;height:1.00px;background:#dcdcdc;"></div>
<div class="t" style="left:281px;top:900.07px;width:863px;overflow:hidden;font-family:'Liberation Mono', monospace;font-size:14px;line-height:14px;color:#333;letter-spacing:-0.03px;"><span class="kw">select</span> param<span class="op">,</span> value <span class="kw">from</span> settings$ <span class="kw">where</span> obj# <span class="op">=</span> <span class="op">:</span><span class="nu">1</span></div>
<div id="t139" class="t" style="left:1165.50px;top:898.78px;font-size:14.20px;line-height:14.20px;color:#333;font-weight:400;font-family:'Liberation Sans', sans-serif;">3</div>
<div id="t140" class="t" style="left:1264.00px;top:898.78px;font-size:14.20px;line-height:14.20px;color:#333;font-weight:400;font-family:'Liberation Sans', sans-serif;">717 μs</div>
<div id="t141" class="t" style="left:1417.20px;top:898.78px;font-size:14.20px;line-height:14.20px;color:#333;font-weight:400;font-family:'Liberation Sans', sans-serif;">239 μs</div>
<div id="t142" class="t" style="left:1555.70px;top:898.78px;font-size:14.20px;line-height:14.20px;color:#333;font-weight:400;font-family:'Liberation Sans', sans-serif;">8</div>
<div id="t143" class="t" style="left:1700.20px;top:898.78px;font-size:14.20px;line-height:14.20px;color:#333;font-weight:400;font-family:'Liberation Sans', sans-serif;">9</div>
<div class="r" style="left:260.40px;top:953.94px;width:1621.20px;height:1.00px;background:#dcdcdc;"></div>
<div class="t" style="left:281px;top:931.69px;width:863px;overflow:hidden;font-family:'Liberation Mono', monospace;font-size:14px;line-height:14px;color:#333;letter-spacing:-0.03px;"><span class="kw">select</span> owner#<span class="op">,</span>name<span class="op">,</span>namespace<span class="op">,</span>remoteowner<span class="op">,</span>linkname<span class="op">,</span>p_timestamp<span class="op">,</span>p_obj#<span class="op">,</span> <span class="fn">nvl</span><span class="op">(</span>property<span class="op">,</span><span class="nu">0</span><span class="op">)</span><span class="op">,</span>subname<span class="op">,</span>type#<span class="op">,</span>fla</div>
<div id="t145" class="t" style="left:1165.50px;top:930.40px;font-size:14.20px;line-height:14.20px;color:#333;font-weight:400;font-family:'Liberation Sans', sans-serif;">499</div>
<div id="t146" class="t" style="left:1264.00px;top:930.40px;font-size:14.20px;line-height:14.20px;color:#333;font-weight:400;font-family:'Liberation Sans', sans-serif;">77.75 ms</div>
<div id="t147" class="t" style="left:1417.20px;top:930.40px;font-size:14.20px;line-height:14.20px;color:#333;font-weight:400;font-family:'Liberation Sans', sans-serif;">155.82 μs</div>
<div id="t148" class="t" style="left:1555.70px;top:930.40px;font-size:14.20px;line-height:14.20px;color:#333;font-weight:400;font-family:'Liberation Sans', sans-serif;">7.62</div>
<div id="t149" class="t" style="left:1700.20px;top:930.40px;font-size:14.20px;line-height:14.20px;color:#333;font-weight:400;font-family:'Liberation Sans', sans-serif;">8.62</div>
<div class="r" style="left:260.40px;top:985.56px;width:1621.20px;height:1.00px;background:#dcdcdc;"></div>
<div class="t" style="left:281px;top:963.31px;width:863px;overflow:hidden;font-family:'Liberation Mono', monospace;font-size:14px;line-height:14px;color:#333;letter-spacing:-0.03px;"><span class="kw">select</span> ts# <span class="kw">from</span> ts$ <span class="kw">where</span> ts$.online$ <span class="op">!=</span> <span class="nu">3</span> <span class="kw">and</span> <span class="fn">bitand</span><span class="op">(</span>flags<span class="op">,</span><span class="nu">2048</span><span class="op">)</span> <span class="op">!=</span> <span class="nu">2048</span></div>
<div id="t151" class="t" style="left:1165.50px;top:962.02px;font-size:14.20px;line-height:14.20px;color:#333;font-weight:400;font-family:'Liberation Sans', sans-serif;">1</div>
<div id="t152" class="t" style="left:1264.00px;top:962.02px;font-size:14.20px;line-height:14.20px;color:#333;font-weight:400;font-family:'Liberation Sans', sans-serif;">70 μs</div>
<div id="t153" class="t" style="left:1417.20px;top:962.02px;font-size:14.20px;line-height:14.20px;color:#333;font-weight:400;font-family:'Liberation Sans', sans-serif;">70 μs</div>
<div id="t154" class="t" style="left:1555.70px;top:962.02px;font-size:14.20px;line-height:14.20px;color:#333;font-weight:400;font-family:'Liberation Sans', sans-serif;">5</div>
<div id="t155" class="t" style="left:1700.20px;top:962.02px;font-size:14.20px;line-height:14.20px;color:#333;font-weight:400;font-family:'Liberation Sans', sans-serif;">6</div>
<div class="r" style="left:260.40px;top:1017.18px;width:1621.20px;height:1.00px;background:#dcdcdc;"></div>
<div class="t" style="left:281px;top:994.93px;width:863px;overflow:hidden;font-family:'Liberation Mono', monospace;font-size:14px;line-height:14px;color:#333;letter-spacing:-0.03px;"><span class="kw">select</span> c.owner#<span class="op">,</span> c.name<span class="op">,</span> c.con#<span class="op">,</span> d.type# <span class="kw">from</span> con$ c<span class="op">,</span>cdef$ d <span class="kw">where</span> d.obj#<span class="op">=</span><span class="op">:</span><span class="nu">1</span> <span class="kw">and</span> d.con#<span class="op">=</span>c.con#</div>
<div id="t157" class="t" style="left:1165.50px;top:993.64px;font-size:14.20px;line-height:14.20px;color:#333;font-weight:400;font-family:'Liberation Sans', sans-serif;">5</div>
<div id="t158" class="t" style="left:1264.00px;top:993.64px;font-size:14.20px;line-height:14.20px;color:#333;font-weight:400;font-family:'Liberation Sans', sans-serif;">3.43 ms</div>
<div id="t159" class="t" style="left:1417.20px;top:993.64px;font-size:14.20px;line-height:14.20px;color:#333;font-weight:400;font-family:'Liberation Sans', sans-serif;">685.6 μs</div>
<div id="t160" class="t" style="left:1555.70px;top:993.64px;font-size:14.20px;line-height:14.20px;color:#333;font-weight:400;font-family:'Liberation Sans', sans-serif;">4.8</div>
<div id="t161" class="t" style="left:1700.20px;top:993.64px;font-size:14.20px;line-height:14.20px;color:#333;font-weight:400;font-family:'Liberation Sans', sans-serif;">5.8</div>
<div class="r" style="left:260.40px;top:1048.80px;width:1621.20px;height:1.00px;background:#dcdcdc;"></div>
<div class="t" style="left:281px;top:1026.55px;width:863px;overflow:hidden;font-family:'Liberation Mono', monospace;font-size:14px;line-height:14px;color:#333;letter-spacing:-0.03px;"><span class="kw">select</span> position#<span class="op">,</span>sequence#<span class="op">,</span>level#<span class="op">,</span>argument<span class="op">,</span>type#<span class="op">,</span>charsetid<span class="op">,</span>charsetform<span class="op">,</span>properties<span class="op">,</span><span class="fn">nvl</span><span class="op">(</span>length<span class="op">,</span> <span class="nu">0</span><span class="op">)</span><span class="op">,</span> <span class="fn">nvl</span><span class="op">(</span>p</div>
<div id="t163" class="t" style="left:1165.50px;top:1025.26px;font-size:14.20px;line-height:14.20px;color:#333;font-weight:400;font-family:'Liberation Sans', sans-serif;">2.7K</div>
<div id="t164" class="t" style="left:1264.00px;top:1025.26px;font-size:14.20px;line-height:14.20px;color:#333;font-weight:400;font-family:'Liberation Sans', sans-serif;">60.91 ms</div>
<div id="t165" class="t" style="left:1417.20px;top:1025.26px;font-size:14.20px;line-height:14.20px;color:#333;font-weight:400;font-family:'Liberation Sans', sans-serif;">22.22 μs</div>
<div id="t166" class="t" style="left:1555.70px;top:1025.26px;font-size:14.20px;line-height:14.20px;color:#333;font-weight:400;font-family:'Liberation Sans', sans-serif;">4.36</div>
<div id="t167" class="t" style="left:1700.20px;top:1025.26px;font-size:14.20px;line-height:14.20px;color:#333;font-weight:400;font-family:'Liberation Sans', sans-serif;">5.36</div>
<div class="r" style="left:260.40px;top:1080.42px;width:1621.20px;height:1.00px;background:#dcdcdc;"></div>
<div class="t" style="left:281px;top:1058.17px;width:863px;overflow:hidden;font-family:'Liberation Mono', monospace;font-size:14px;line-height:14px;color:#333;letter-spacing:-0.03px;"><span class="kw">select</span> con#<span class="op">,</span>type#<span class="op">,</span>condlength<span class="op">,</span>intcols<span class="op">,</span>robj#<span class="op">,</span>rcon#<span class="op">,</span><span class="kw">match</span>#<span class="op">,</span>refact<span class="op">,</span><span class="fn">nvl</span><span class="op">(</span>enabled<span class="op">,</span><span class="nu">0</span><span class="op">)</span><span class="op">,</span>rowid<span class="op">,</span>cols<span class="op">,</span><span class="fn">nvl</span><span class="op">(</span>defer<span class="op">,</span><span class="nu">0</span><span class="op">)</span><span class="op">,</span>m</div>
<div id="t169" class="t" style="left:1165.50px;top:1056.88px;font-size:14.20px;line-height:14.20px;color:#333;font-weight:400;font-family:'Liberation Sans', sans-serif;">630</div>
<div id="t170" class="t" style="left:1264.00px;top:1056.88px;font-size:14.20px;line-height:14.20px;color:#333;font-weight:400;font-family:'Liberation Sans', sans-serif;">26.68 ms</div>
<div id="t171" class="t" style="left:1417.20px;top:1056.88px;font-size:14.20px;line-height:14.20px;color:#333;font-weight:400;font-family:'Liberation Sans', sans-serif;">42.35 μs</div>
<div id="t172" class="t" style="left:1555.70px;top:1056.88px;font-size:14.20px;line-height:14.20px;color:#333;font-weight:400;font-family:'Liberation Sans', sans-serif;">4.14</div>
<div id="t173" class="t" style="left:1700.20px;top:1056.88px;font-size:14.20px;line-height:14.20px;color:#333;font-weight:400;font-family:'Liberation Sans', sans-serif;">5.14</div>
<div class="r" style="left:260.40px;top:543.20px;width:1621.20px;height:31.20px;background:#f7f8fa;border-radius:3px 3px 0 0;box-shadow:0 1px 2px rgba(0,0,0,0.22),0 0 2px rgba(0,0,0,0.06);"></div>
<div id="t174" class="t" style="left:281.00px;top:550.89px;font-size:14.30px;line-height:14.30px;color:#333;font-weight:700;font-family:'Liberation Sans', sans-serif;transform:scaleX(0.9092);transform-origin:left center;">STATEMENT</div>
<div id="t175" class="t" style="left:1165.80px;top:550.89px;font-size:14.30px;line-height:14.30px;color:#333;font-weight:700;font-family:'Liberation Sans', sans-serif;transform:scaleX(0.9433);transform-origin:left center;">COUNT</div>
<svg class="r" style="left:1223.00px;top:553.00px;" width="8.50" height="10.60" viewBox="0 0 8.50 10.60"><path d="M4.25 0 L8.5 4.3 L0 4.3 Z M0 6.3 L8.5 6.3 L4.25 10.6 Z" fill="#333"/></svg>
<div id="t176" class="t" style="left:1264.30px;top:550.89px;font-size:14.30px;line-height:14.30px;color:#333;font-weight:700;font-family:'Liberation Sans', sans-serif;transform:scaleX(0.9505);transform-origin:left center;">TOTAL DURATION</div>
<svg class="r" style="left:1391.60px;top:553.00px;" width="8.50" height="10.60" viewBox="0 0 8.50 10.60"><path d="M4.25 0 L8.5 4.3 L0 4.3 Z M0 6.3 L8.5 6.3 L4.25 10.6 Z" fill="#333"/></svg>
<div id="t177" class="t" style="left:1417.50px;top:550.89px;font-size:14.30px;line-height:14.30px;color:#333;font-weight:700;font-family:'Liberation Sans', sans-serif;transform:scaleX(0.9606);transform-origin:left center;">AVG DURATION</div>
<svg class="r" style="left:1530.00px;top:553.00px;" width="8.50" height="10.60" viewBox="0 0 8.50 10.60"><path d="M4.25 0 L8.5 4.3 L0 4.3 Z M0 6.3 L8.5 6.3 L4.25 10.6 Z" fill="#333"/></svg>
<div id="t178" class="t" style="left:1556.00px;top:550.89px;font-size:14.30px;line-height:14.30px;color:#333;font-weight:700;font-family:'Liberation Sans', sans-serif;transform:scaleX(0.9078);transform-origin:left center;">AVG ROWS SENT</div>
<svg class="r" style="left:1674.80px;top:553.00px;" width="8.50" height="10.60" viewBox="0 0 8.50 10.60"><path d="M4.25 0 L8.5 4.3 L0 4.3 Z M0 6.3 L8.5 6.3 L4.25 10.6 Z" fill="#333"/></svg>
<div id="t179" class="t" style="left:1700.50px;top:550.89px;font-size:14.30px;line-height:14.30px;color:#2a8ee8;font-weight:700;font-family:'Liberation Sans', sans-serif;transform:scaleX(0.9271);transform-origin:left center;">ROWS SCANNED / SENT</div>
<svg class="r" style="left:1866.00px;top:550.50px;" width="8.00" height="14.50" viewBox="0 0 8.00 14.50"><rect x="2.8" y="0.5" width="2.4" height="10" fill="#2a8ee8"/><path d="M0 8.5 L8 8.5 L4 13.8 Z" fill="#2a8ee8"/></svg>
</body></html>
